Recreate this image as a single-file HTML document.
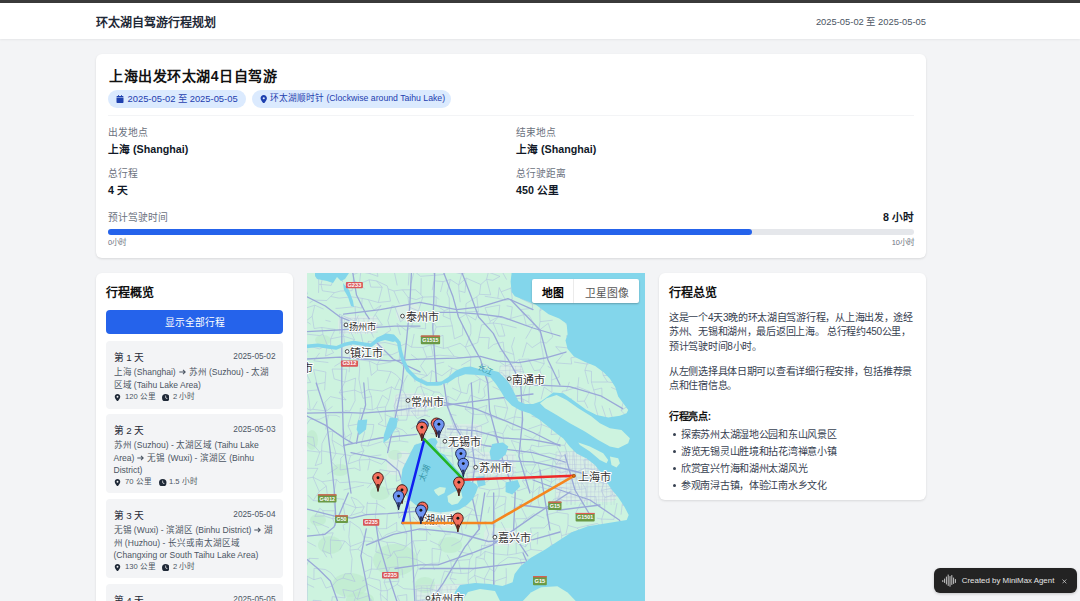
<!DOCTYPE html>
<html lang="zh-CN"><head><meta charset="utf-8">
<style>
*{box-sizing:border-box;margin:0;padding:0}
html,body{width:1080px;height:601px;overflow:hidden}
body{background:#f3f4f6;font-family:"Liberation Sans",sans-serif;position:relative;color:#111827}
.abs{position:absolute;white-space:nowrap}
#topbar{position:absolute;left:0;top:0;width:1080px;height:3px;background:#3a3a3a}
#header{position:absolute;left:0;top:3px;width:1080px;height:36px;background:#fff;box-shadow:0 1px 2px rgba(0,0,0,0.06)}
.card{position:absolute;background:#fff;border-radius:6px;box-shadow:0 1px 3px rgba(0,0,0,0.08),0 1px 2px rgba(0,0,0,0.04)}
.badge{position:absolute;height:17.5px;border-radius:9px;background:#dbeafe;color:#1e40af;font-size:9px;line-height:17.5px;white-space:nowrap}
.lbl{font-size:9.75px;color:#6b7280}
.val{font-size:10.7px;font-weight:700;color:#111827}
.day{position:absolute;left:106px;width:177px;background:#f3f4f6;border-radius:4px}
.day .t{position:absolute;left:7.5px;font-size:9.75px;font-weight:500;color:#1f2937;white-space:nowrap}
.day .d{position:absolute;right:7.5px;font-size:8.25px;color:#4b5563;white-space:nowrap}
.day .r{position:absolute;left:7.5px;width:175px;white-space:nowrap;font-size:8.55px;line-height:12.4px;color:#4b5563}
.day .m{position:absolute;left:8px;width:150px;height:8px;font-size:7.6px;line-height:8px;color:#4b5563;white-space:nowrap}
.ic{position:absolute;top:0}
.para{font-size:10px;letter-spacing:-0.28px;line-height:14.6px;color:#374151}
.li{padding-left:12px}
.li i{position:absolute;left:4.2px;top:5.1px;width:3px;height:3px;border-radius:50%;background:#374151}
</style></head><body>
<div id="topbar"></div>
<div id="header">
  <div class="abs" style="left:96px;top:10px;font-size:12px;font-weight:600;color:#1f2937">环太湖自驾游行程规划</div>
  <div class="abs" style="right:154px;top:10.6px;font-size:9.4px;color:#4b5563">2025-05-02 至 2025-05-05</div>
</div>

<div class="card" style="left:96px;top:54px;width:830px;height:204px">
  <div class="abs" style="left:13px;top:11px;font-size:14px;letter-spacing:0.55px;font-weight:700;color:#111">上海出发环太湖4日自驾游</div>
  <div class="badge" style="left:12px;top:36px;width:138px">
    <svg style="position:absolute;left:8px;top:4.8px" width="8" height="8" viewBox="0 0 448 512"><path fill="#1e40af" d="M96 32V64H48C21.5 64 0 85.5 0 112v48H448V112c0-26.5-21.5-48-48-48H352V32c0-17.7-14.3-32-32-32s-32 14.3-32 32V64H160V32c0-17.7-14.3-32-32-32S96 14.3 96 32zM448 192H0V464c0 26.5 21.5 48 48 48H400c26.5 0 48-21.5 48-48V192z"/></svg>
    <span style="position:absolute;left:19.5px;top:0;font-size:9.4px">2025-05-02 至 2025-05-05</span></div>
  <div class="badge" style="left:155.5px;top:36px;width:199px">
    <svg style="position:absolute;left:8px;top:4.6px" width="7.5" height="8.5" viewBox="0 0 384 512"><path fill="#1e40af" d="M215.7 499.2C267 435 384 279.4 384 192C384 86 298 0 192 0S0 86 0 192c0 87.4 117 243 168.3 307.2c12.3 15.3 35.1 15.3 47.4 0zM192 128a64 64 0 1 1 0 128 64 64 0 1 1 0-128z"/></svg>
    <span style="position:absolute;left:18.5px;top:0;font-size:8.7px">环太湖顺时针 (Clockwise around Taihu Lake)</span></div>
  <div style="position:absolute;left:12px;top:60.5px;width:806px;height:1px;background:#f3f4f6"></div>
  <div class="abs lbl" style="left:12px;top:71.3px">出发地点</div>
  <div class="abs val" style="left:12px;top:86.5px">上海 (Shanghai)</div>
  <div class="abs lbl" style="left:420px;top:71.3px">结束地点</div>
  <div class="abs val" style="left:420px;top:86.5px">上海 (Shanghai)</div>
  <div class="abs lbl" style="left:12px;top:112.3px">总行程</div>
  <div class="abs val" style="left:12px;top:127.6px">4 天</div>
  <div class="abs lbl" style="left:420px;top:112.3px">总行驶距离</div>
  <div class="abs val" style="left:420px;top:127.6px">450 公里</div>
  <div class="abs lbl" style="left:12px;top:156px">预计驾驶时间</div>
  <div class="abs val" style="right:12px;top:155px">8 小时</div>
  <div style="position:absolute;left:12px;top:175px;width:806px;height:5.5px;border-radius:3px;background:#e5e7eb"><div style="width:644px;height:100%;border-radius:3px;background:#2563eb"></div></div>
  <div class="abs" style="left:12px;top:182px;font-size:7.5px;color:#6b7280">0小时</div>
  <div class="abs" style="right:12px;top:182px;font-size:7.5px;color:#6b7280">10小时</div>
</div>

<!-- sidebar -->
<div class="card" style="left:96px;top:273px;width:197px;height:400px">
  <div class="abs" style="left:10px;top:10px;font-size:12px;font-weight:700;color:#111">行程概览</div>
  <div style="position:absolute;left:10px;top:36.5px;width:177px;height:24px;border-radius:4px;background:#2563eb;color:#fff;font-size:9.75px;line-height:25.5px;text-align:center">显示全部行程</div>
</div>
<div class="day" style="top:341.4px;height:67.4px">
  <div class="t" style="top:9px">第 1 天</div>
  <div class="d" style="top:10.5px">2025-05-02</div>
  <div class="r" style="top:25px">上海 (Shanghai) <svg width="7" height="6" viewBox="0 0 7 6" style="vertical-align:0px;margin:0 0.6px"><path d="M0.3 3H6.2M4 0.9L6.2 3L4 5.1" fill="none" stroke="#4b5563" stroke-width="1.05"/></svg> 苏州 (Suzhou) - 太湖<br>区域 (Taihu Lake Area)</div>
  <div class="m" style="top:52.5px"><svg class="ic" width="7" height="7.4" viewBox="0 0 384 512" style="left:-0.3px;top:0.2px"><path fill="#1f2937" d="M215.7 499.2C267 435 384 279.4 384 192C384 86 298 0 192 0S0 86 0 192c0 87.4 117 243 168.3 307.2c12.3 15.3 35.1 15.3 47.4 0zM192 128a64 64 0 1 1 0 128 64 64 0 1 1 0-128z"/></svg><span style="position:absolute;left:11px;top:-0.5px">120 公里</span><svg class="ic" style="left:47.5px" width="7.5" height="7.5" viewBox="0 0 512 512"><path fill="#1f2937" d="M256 0a256 256 0 1 1 0 512A256 256 0 1 1 256 0zM232 120V256c0 8 4 15.5 10.7 20l96 64c11 7.4 25.9 4.4 33.3-6.7s4.4-25.9-6.7-33.3L280 243.2V120c0-13.3-10.7-24-24-24s-24 10.7-24 24z"/></svg><span style="position:absolute;left:59.0px;top:-0.5px">2 小时</span></div>
</div>
<div class="day" style="top:414.2px;height:79px">
  <div class="t" style="top:9px">第 2 天</div>
  <div class="d" style="top:10.5px">2025-05-03</div>
  <div class="r" style="top:25px">苏州 (Suzhou) - 太湖区域 (Taihu Lake<br>Area) <svg width="7" height="6" viewBox="0 0 7 6" style="vertical-align:0px;margin:0 0.6px"><path d="M0.3 3H6.2M4 0.9L6.2 3L4 5.1" fill="none" stroke="#4b5563" stroke-width="1.05"/></svg> 无锡 (Wuxi) - 滨湖区 (Binhu<br>District)</div>
  <div class="m" style="top:64.5px"><svg class="ic" width="7" height="7.4" viewBox="0 0 384 512" style="left:-0.3px;top:0.2px"><path fill="#1f2937" d="M215.7 499.2C267 435 384 279.4 384 192C384 86 298 0 192 0S0 86 0 192c0 87.4 117 243 168.3 307.2c12.3 15.3 35.1 15.3 47.4 0zM192 128a64 64 0 1 1 0 128 64 64 0 1 1 0-128z"/></svg><span style="position:absolute;left:11px;top:-0.5px">70 公里</span><svg class="ic" style="left:45px" width="7.5" height="7.5" viewBox="0 0 512 512"><path fill="#1f2937" d="M256 0a256 256 0 1 1 0 512A256 256 0 1 1 256 0zM232 120V256c0 8 4 15.5 10.7 20l96 64c11 7.4 25.9 4.4 33.3-6.7s4.4-25.9-6.7-33.3L280 243.2V120c0-13.3-10.7-24-24-24s-24 10.7-24 24z"/></svg><span style="position:absolute;left:55.0px;top:-0.5px">1.5 小时</span></div>
</div>
<div class="day" style="top:499.2px;height:79.3px">
  <div class="t" style="top:9px">第 3 天</div>
  <div class="d" style="top:10.5px">2025-05-04</div>
  <div class="r" style="top:25px">无锡 (Wuxi) - 滨湖区 (Binhu District) <svg width="7" height="6" viewBox="0 0 7 6" style="vertical-align:0px;margin:0 0.6px"><path d="M0.3 3H6.2M4 0.9L6.2 3L4 5.1" fill="none" stroke="#4b5563" stroke-width="1.05"/></svg> 湖<br>州 (Huzhou) - 长兴或南太湖区域<br>(Changxing or South Taihu Lake Area)</div>
  <div class="m" style="top:64.5px"><svg class="ic" width="7" height="7.4" viewBox="0 0 384 512" style="left:-0.3px;top:0.2px"><path fill="#1f2937" d="M215.7 499.2C267 435 384 279.4 384 192C384 86 298 0 192 0S0 86 0 192c0 87.4 117 243 168.3 307.2c12.3 15.3 35.1 15.3 47.4 0zM192 128a64 64 0 1 1 0 128 64 64 0 1 1 0-128z"/></svg><span style="position:absolute;left:11px;top:-0.5px">130 公里</span><svg class="ic" style="left:47.5px" width="7.5" height="7.5" viewBox="0 0 512 512"><path fill="#1f2937" d="M256 0a256 256 0 1 1 0 512A256 256 0 1 1 256 0zM232 120V256c0 8 4 15.5 10.7 20l96 64c11 7.4 25.9 4.4 33.3-6.7s4.4-25.9-6.7-33.3L280 243.2V120c0-13.3-10.7-24-24-24s-24 10.7-24 24z"/></svg><span style="position:absolute;left:59.0px;top:-0.5px">2 小时</span></div>
</div>
<div class="day" style="top:584.2px;height:79px">
  <div class="t" style="top:9px">第 4 天</div>
  <div class="d" style="top:10.5px">2025-05-05</div>
</div>

<!-- map -->
<div id="map" style="position:absolute;left:307px;top:273px;width:338px;height:328px;background:#c8efd9;overflow:hidden">
<svg width="338" height="328" viewBox="307 273 338 328" style="position:absolute;left:0;top:0">
<rect x="307" y="273" width="338" height="328" fill="#cdf3df"/>
<rect x="338" y="316" width="40" height="18" rx="6" fill="#e6ecee" opacity="0.45"/>
<rect x="342" y="343" width="42" height="15" rx="6" fill="#e6ecee" opacity="0.45"/>
<rect x="396" y="304" width="24" height="17" rx="6" fill="#e6ecee" opacity="0.45"/>
<rect x="394" y="393" width="34" height="23" rx="6" fill="#e6ecee" opacity="0.45"/>
<rect x="436" y="424" width="46" height="28" rx="6" fill="#e6ecee" opacity="0.45"/>
<rect x="468" y="452" width="48" height="24" rx="6" fill="#e6ecee" opacity="0.45"/>
<rect x="556" y="452" width="60" height="50" rx="6" fill="#e6ecee" opacity="0.45"/>
<rect x="500" y="364" width="22" height="24" rx="6" fill="#e6ecee" opacity="0.45"/>
<rect x="484" y="528" width="32" height="18" rx="6" fill="#e6ecee" opacity="0.45"/>
<rect x="416" y="584" width="52" height="17" rx="6" fill="#e6ecee" opacity="0.45"/>
<rect x="414" y="508" width="42" height="20" rx="6" fill="#e6ecee" opacity="0.45"/>
<rect x="387" y="451" width="23" height="24" rx="6" fill="#e6ecee" opacity="0.45"/>
<ellipse cx="395" cy="560" rx="22" ry="16" fill="#bde9cb" opacity="0.6"/>
<ellipse cx="350" cy="585" rx="18" ry="12" fill="#bde9cb" opacity="0.6"/>
<ellipse cx="330" cy="545" rx="12" ry="9" fill="#bde9cb" opacity="0.6"/>
<ellipse cx="380" cy="493" rx="10" ry="7" fill="#bde9cb" opacity="0.6"/>
<ellipse cx="450" cy="545" rx="12" ry="8" fill="#bde9cb" opacity="0.6"/>
<ellipse cx="323" cy="340" rx="8" ry="5" fill="#bde9cb" opacity="0.6"/>
<ellipse cx="340" cy="470" rx="9" ry="6" fill="#bde9cb" opacity="0.6"/>
<ellipse cx="318" cy="520" rx="8" ry="6" fill="#bde9cb" opacity="0.6"/>
<ellipse cx="425" cy="585" rx="10" ry="8" fill="#bde9cb" opacity="0.6"/>
<ellipse cx="360" cy="600" rx="14" ry="8" fill="#bde9cb" opacity="0.6"/>
<ellipse cx="312" cy="440" rx="6" ry="10" fill="#bde9cb" opacity="0.6"/>
<ellipse cx="395" cy="455" rx="7" ry="5" fill="#bde9cb" opacity="0.6"/>
<path d="M296.6 261.2L304.0 262.0M299.2 269.6L306.1 276.0M294.5 291.1L307.4 294.1M294.6 305.7L297.4 320.6M297.4 320.6L305.9 321.1M297.4 320.6L295.0 324.8M299.0 339.6L304.4 333.9M298.6 344.2L301.8 350.4M301.8 350.4L307.7 352.1M300.9 361.3L295.2 368.9M295.2 368.9L296.5 383.5M296.5 383.5L310.6 382.5M296.5 383.5L295.4 390.7M298.4 404.5L310.2 410.2M299.4 425.4L306.1 425.2M299.4 425.4L296.5 435.7M297.6 442.4L300.4 454.6M300.4 454.6L304.7 450.3M300.4 454.6L296.0 462.6M296.0 462.6L298.2 474.0M298.2 474.0L299.8 478.3M299.8 478.3L303.8 478.9M299.8 478.3L301.8 485.9M301.8 485.9L303.2 492.0M301.8 485.9L297.3 500.1M295.2 506.9L305.0 505.8M295.2 506.9L294.3 517.3M294.3 517.3L300.1 525.6M300.1 525.6L309.8 528.9M300.1 525.6L301.0 532.5M301.0 532.5L306.7 533.9M301.0 532.5L299.6 543.8M299.6 543.8L303.7 539.8M299.6 543.8L298.6 551.6M298.6 551.6L300.7 564.6M300.7 564.6L309.6 558.3M297.8 571.3L303.2 573.6M299.2 591.9L307.3 584.2M299.2 591.9L300.6 595.3M300.6 595.3L297.1 607.3M294.2 614.7L295.3 620.9M295.3 620.9L304.3 626.2M304.0 262.0L314.6 261.8M304.0 262.0L306.1 276.0M306.1 276.0L303.6 281.6M303.6 281.6L307.4 294.1M309.6 302.9L313.8 300.1M305.2 308.3L314.8 305.2M305.2 308.3L305.9 321.1M305.9 321.1L312.2 316.2M305.9 321.1L310.7 324.2M304.4 333.9L319.7 335.6M304.9 344.9L319.5 348.9M304.9 344.9L307.7 352.1M306.0 372.5L310.6 382.5M307.1 390.9L318.7 389.8M307.1 390.9L308.4 395.4M308.4 395.4L310.2 410.2M310.2 410.2L312.7 409.3M310.0 419.4L319.3 419.3M310.0 419.4L306.1 425.2M303.8 436.1L313.4 437.3M303.8 436.1L303.5 440.5M303.5 440.5L314.7 446.4M303.5 440.5L304.7 450.3M304.7 450.3L319.8 452.2M303.0 468.2L317.8 468.4M303.8 478.9L313.0 477.2M307.9 495.2L313.2 500.6M305.0 505.8L305.9 513.0M303.7 539.8L316.2 546.5M309.6 558.3L318.6 558.7M309.6 558.3L303.2 573.6M307.2 576.2L313.9 579.7M307.2 576.2L307.3 584.2M307.3 584.2L314.1 587.4M307.3 584.2L307.2 600.8M309.9 607.6L305.1 613.9M305.1 613.9L304.3 626.2M304.3 626.2L307.3 635.2M314.6 261.8L325.2 260.1M318.5 276.9L324.5 270.5M318.5 276.9L318.8 284.4M318.8 284.4L321.0 284.4M318.8 284.4L318.5 292.9M313.8 300.1L326.8 300.5M314.8 305.2L323.6 309.1M314.8 305.2L312.2 316.2M312.2 316.2L314.1 328.5M314.1 328.5L321.8 327.5M319.7 335.6L323.0 334.2M319.5 348.9L327.2 345.1M319.6 352.9L313.8 360.8M313.8 360.8L328.3 362.5M313.6 369.6L325.9 372.0M313.6 369.6L317.0 384.2M317.0 384.2L325.1 382.5M317.0 384.2L318.7 389.8M317.2 401.4L312.7 409.3M312.7 409.3L326.6 411.0M319.3 419.3L328.5 415.1M313.4 437.3L314.7 446.4M314.7 446.4L319.8 452.2M319.8 452.2L321.6 450.9M319.8 452.2L315.2 465.6M315.2 465.6L321.6 463.4M317.8 468.4L313.0 477.2M313.0 477.2L322.2 481.7M313.0 477.2L319.2 491.5M319.2 491.5L326.3 486.1M319.2 491.5L313.2 500.6M313.2 500.6L328.1 501.7M319.8 508.3L322.8 510.6M319.8 508.3L314.8 516.4M314.8 516.4L324.2 515.9M313.0 521.1L328.9 527.7M313.0 521.1L319.8 535.2M314.0 568.3L325.4 569.5M314.0 568.3L313.9 579.7M313.9 579.7L321.1 577.7M313.0 600.3L321.5 600.9M313.0 600.3L314.8 605.7M314.8 605.7L327.3 609.8M316.7 618.2L315.4 627.3M315.4 627.3L321.3 626.2M315.4 627.3L316.0 633.3M325.2 260.1L333.4 267.3M324.5 270.5L321.0 284.4M321.0 284.4L331.2 285.4M321.0 284.4L322.4 290.8M322.4 290.8L334.6 292.6M326.8 300.5L330.7 296.5M325.4 320.3L330.6 321.5M321.8 327.5L335.1 329.4M321.8 327.5L323.0 334.2M323.0 334.2L327.2 345.1M327.2 345.1L330.5 347.9M327.2 345.1L325.5 356.1M325.5 356.1L333.6 352.7M325.9 372.0L325.1 382.5M325.1 382.5L324.6 390.3M324.8 402.5L330.4 396.6M324.8 402.5L326.6 411.0M326.6 411.0L332.5 406.4M328.5 415.1L336.1 415.3M328.5 415.1L325.5 429.5M327.7 432.1L332.8 431.1M327.7 432.1L322.0 443.5M322.0 443.5L321.6 450.9M321.6 450.9L335.9 453.4M321.6 450.9L321.6 463.4M327.3 474.2L337.5 467.9M322.2 481.7L336.6 479.5M322.2 481.7L326.3 486.1M326.3 486.1L328.1 501.7M328.1 501.7L333.1 498.1M322.8 510.6L335.5 510.9M322.8 510.6L324.2 515.9M324.2 515.9L332.7 518.7M322.3 533.5L333.2 532.8M322.3 533.5L325.1 541.7M325.1 541.7L322.6 550.5M322.6 550.5L330.6 553.9M322.6 550.5L326.8 557.2M325.4 569.5L330.7 572.7M321.1 577.7L326.0 588.1M326.0 588.1L332.3 585.9M321.5 600.9L327.3 609.8M327.3 609.8L331.3 605.6M321.8 613.1L332.1 618.7M321.8 613.1L321.3 626.2M336.6 271.1L339.0 272.1M336.6 271.1L331.2 285.4M334.6 292.6L340.6 291.0M334.6 292.6L330.7 296.5M330.7 296.5L339.0 298.1M335.5 308.4L339.7 308.2M335.1 329.4L330.7 338.8M330.7 338.8L343.7 336.2M330.7 338.8L330.5 347.9M330.5 347.9L333.6 352.7M334.4 366.4L342.1 361.6M332.1 369.0L346.9 369.2M332.1 369.0L334.2 378.9M334.2 378.9L344.8 382.1M330.4 396.6L346.1 400.0M336.1 415.3L340.1 417.2M332.8 431.1L345.4 437.6M332.8 431.1L332.0 440.1M332.0 440.1L343.7 447.1M332.0 440.1L335.9 453.4M335.9 453.4L344.5 454.5M335.9 453.4L331.5 461.8M331.5 461.8L337.5 467.9M336.6 479.5L339.8 482.7M336.6 479.5L334.0 491.7M334.0 491.7L333.1 498.1M333.1 498.1L344.0 499.4M333.1 498.1L335.5 510.9M335.5 510.9L332.7 518.7M332.7 518.7L345.4 518.0M332.7 518.7L335.7 526.1M333.2 532.8L330.4 540.0M330.4 540.0L344.9 541.0M330.4 540.0L330.6 553.9M330.6 553.9L332.0 558.3M330.7 572.7L337.0 580.4M337.0 580.4L343.0 578.1M337.0 580.4L332.3 585.9M332.3 596.7L345.1 597.9M332.3 596.7L331.3 605.6M331.3 605.6L344.1 602.6M339.0 272.1L342.8 282.0M340.6 291.0L352.1 290.7M339.0 298.1L351.7 296.9M339.7 308.2L355.1 306.6M339.3 314.2L355.8 321.5M339.3 314.2L341.4 324.9M341.4 324.9L348.1 326.7M341.4 324.9L343.7 336.2M343.7 336.2L354.6 339.7M343.7 336.2L345.0 346.3M346.9 369.2L344.8 382.1M344.8 382.1L355.6 378.1M344.8 382.1L339.4 392.7M339.4 392.7L354.6 390.1M339.4 392.7L346.1 400.0M344.9 410.5L349.9 411.2M343.0 428.7L345.4 437.6M345.4 437.6L351.6 433.4M343.7 447.1L349.1 442.8M344.5 454.5L350.5 455.7M344.5 454.5L340.8 458.2M340.8 458.2L340.1 469.9M340.1 469.9L354.7 468.0M339.8 482.7L355.4 481.7M343.5 490.0L355.2 487.3M342.9 503.0L356.0 507.7M342.9 503.0L345.4 518.0M345.4 518.0L350.9 515.4M343.0 525.3L350.2 521.4M343.0 525.3L344.3 530.5M344.9 541.0L350.3 546.5M344.9 541.0L339.6 550.1M344.9 573.8L351.0 573.6M344.9 573.8L343.0 578.1M343.0 578.1L355.1 581.5M342.8 589.5L353.0 591.3M342.8 589.5L345.1 597.9M344.9 622.4L354.0 625.2M344.9 622.4L343.5 629.1M348.5 262.2L364.4 261.0M348.5 262.2L353.4 274.5M353.4 274.5L360.8 271.7M353.4 274.5L353.4 280.3M353.4 280.3L359.4 283.9M353.4 280.3L352.1 290.7M351.7 296.9L362.2 298.4M355.1 306.6L361.5 308.2M355.1 306.6L355.8 321.5M355.8 321.5L358.3 315.3M355.8 321.5L348.1 326.7M348.1 326.7L354.6 339.7M354.6 339.7L351.6 343.1M351.6 343.1L349.7 357.6M349.7 357.6L349.7 363.7M349.7 363.7L349.1 372.2M355.6 378.1L354.6 390.1M354.6 390.1L361.6 393.1M354.6 390.1L355.1 400.6M355.1 400.6L349.9 411.2M351.9 413.2L348.0 425.9M348.0 425.9L357.5 424.2M348.0 425.9L351.6 433.4M351.6 433.4L349.1 442.8M350.5 455.7L363.9 450.7M350.5 455.7L348.0 464.0M348.0 464.0L359.2 460.0M354.7 468.0L360.2 470.6M355.4 481.7L364.6 482.8M355.2 487.3L364.0 485.2M351.0 497.1L357.3 499.7M351.0 497.1L356.0 507.7M356.0 507.7L364.2 506.8M356.0 507.7L350.9 515.4M350.9 515.4L361.7 512.0M350.2 521.4L360.1 528.4M350.2 521.4L348.8 536.7M348.8 536.7L350.3 546.5M350.3 546.5L364.8 541.0M350.3 546.5L350.0 550.1M350.0 550.1L357.9 549.2M350.0 550.1L352.1 558.5M352.1 558.5L351.0 573.6M351.0 573.6L355.1 581.5M353.0 591.3L360.7 588.4M353.0 591.3L355.5 597.4M355.5 597.4L357.3 599.3M355.5 597.4L353.8 602.4M353.8 602.4L358.9 609.4M353.9 614.6L362.2 613.4M353.9 614.6L354.0 625.2M354.0 625.2L358.0 622.0M354.0 625.2L350.3 629.4M364.4 261.0L366.9 260.6M364.4 261.0L360.8 271.7M360.8 271.7L370.2 273.7M360.8 271.7L359.4 283.9M359.4 283.9L369.1 279.8M359.4 283.9L364.8 289.1M362.2 298.4L368.4 299.7M362.2 298.4L361.5 308.2M358.7 330.2L361.0 333.8M361.0 333.8L364.3 349.0M364.3 349.0L368.5 341.2M364.3 349.0L360.6 351.1M360.6 351.1L358.5 359.7M358.5 359.7L369.4 361.1M358.5 359.7L359.7 368.7M359.7 368.7L358.9 379.1M358.9 379.1L361.6 393.1M361.6 393.1L368.7 389.4M361.6 393.1L363.0 398.3M363.0 398.3L371.5 396.6M360.3 408.2L372.4 409.9M360.3 408.2L360.0 415.7M360.0 415.7L357.5 424.2M357.5 424.2L373.8 424.5M357.5 424.2L364.7 432.0M364.7 432.0L361.0 445.0M361.0 445.0L367.8 446.1M361.0 445.0L363.9 450.7M363.9 450.7L359.2 460.0M359.2 460.0L370.0 459.5M359.2 460.0L360.2 470.6M364.6 482.8L371.3 483.6M357.3 499.7L364.2 506.8M364.2 506.8L361.7 512.0M361.7 512.0L366.5 515.1M360.1 528.4L363.6 536.8M363.6 536.8L371.9 538.0M363.6 536.8L364.8 541.0M364.8 541.0L373.5 541.6M364.8 541.0L357.9 549.2M357.9 549.2L367.5 555.5M364.5 571.8L371.3 569.0M362.2 581.1L369.0 577.7M360.7 588.4L367.4 584.0M360.7 588.4L357.3 599.3M357.3 599.3L368.2 595.8M358.9 609.4L373.6 603.0M362.2 613.4L358.0 622.0M358.0 622.0L362.1 634.6M366.9 260.6L370.2 273.7M370.2 273.7L378.0 276.4M369.1 279.8L376.5 280.9M369.1 279.8L370.8 287.1M370.8 287.1L382.2 287.2M368.4 299.7L378.3 302.5M368.4 299.7L373.7 310.2M373.7 310.2L381.1 305.3M373.1 317.8L375.3 314.5M367.9 325.0L382.4 325.1M367.9 325.0L373.7 337.6M368.5 341.2L377.7 343.2M368.5 341.2L370.0 355.4M370.0 355.4L382.7 354.9M369.4 361.1L377.1 364.7M369.4 361.1L371.3 375.4M371.3 375.4L377.5 370.2M367.8 377.3L368.7 389.4M368.7 389.4L382.3 391.1M368.7 389.4L371.5 396.6M371.5 396.6L372.4 409.9M372.4 409.9L376.9 407.8M373.8 424.5L372.6 432.8M372.6 432.8L367.8 446.1M367.8 446.1L382.4 441.5M368.4 456.6L381.4 454.9M368.4 456.6L370.0 459.5M370.0 459.5L381.6 464.2M370.0 459.5L367.8 470.3M371.3 483.6L377.6 478.9M371.3 483.6L367.2 488.1M367.7 501.8L367.1 503.4M367.1 503.4L377.0 503.5M367.1 503.4L366.5 515.1M371.9 538.0L373.5 541.6M373.5 541.6L377.1 539.7M367.5 555.5L372.0 557.3M372.0 557.3L371.3 569.0M371.3 569.0L376.9 569.3M371.3 569.0L369.0 577.7M369.0 577.7L380.0 580.4M367.4 584.0L381.0 590.8M368.2 595.8L373.6 603.0M373.7 612.7L379.5 614.0M373.7 612.7L368.9 626.6M375.4 263.8L378.0 276.4M376.5 280.9L387.2 285.9M376.5 280.9L382.2 287.2M382.2 287.2L378.3 302.5M378.3 302.5L390.5 301.2M381.1 305.3L375.3 314.5M375.3 314.5L382.4 325.1M381.0 339.2L384.3 334.3M381.0 339.2L377.7 343.2M377.7 343.2L385.0 342.5M377.7 343.2L382.7 354.9M382.7 354.9L391.8 354.7M382.7 354.9L377.1 364.7M377.1 364.7L391.4 362.0M377.1 364.7L377.5 370.2M377.5 370.2L390.9 371.6M382.3 391.1L391.6 386.8M382.5 395.2L388.8 400.0M382.5 395.2L376.9 407.8M376.9 407.8L385.7 406.9M376.9 407.8L382.7 420.6M382.7 420.6L378.1 424.0M378.1 424.0L386.0 426.8M381.6 464.2L386.5 459.6M379.9 469.6L390.4 471.4M379.9 469.6L377.6 478.9M376.6 500.0L377.0 503.5M377.0 503.5L385.3 508.6M377.0 503.5L375.3 516.4M375.3 516.4L377.6 528.8M377.6 528.8L386.5 528.6M377.6 528.8L382.1 537.9M382.1 537.9L386.5 534.5M377.1 539.7L386.9 542.3M377.1 539.7L375.8 552.0M375.8 552.0L390.9 556.0M380.7 560.6L376.9 569.3M376.9 569.3L389.8 567.6M380.0 580.4L381.0 590.8M381.0 590.8L387.4 590.6M381.0 590.8L380.3 594.0M380.3 594.0L387.2 600.1M380.3 594.0L381.7 604.4M381.7 604.4L387.7 603.3M381.7 604.4L379.5 614.0M379.5 614.0L384.1 615.4M379.5 614.0L380.9 621.6M380.9 621.6L389.1 627.3M380.9 621.6L377.0 631.0M388.6 271.6L394.2 271.3M387.2 285.9L388.1 288.9M388.1 288.9L393.9 290.9M388.1 288.9L390.5 301.2M391.9 305.8L394.6 306.0M391.9 305.8L387.8 320.6M387.8 320.6L390.7 330.3M390.7 330.3L384.3 334.3M385.0 342.5L400.2 346.0M391.8 354.7L399.6 351.3M390.9 371.6L396.2 374.8M390.9 371.6L386.1 383.2M391.6 386.8L394.7 389.2M391.6 386.8L388.8 400.0M388.8 400.0L385.7 406.9M385.7 406.9L385.1 414.6M385.1 414.6L398.8 420.2M385.1 414.6L386.0 426.8M386.0 426.8L393.3 426.5M389.2 432.6L399.1 431.3M384.1 442.6L399.7 440.9M384.1 442.6L389.4 450.5M390.4 471.4L396.4 471.7M390.4 471.4L384.5 476.8M384.5 476.8L387.2 489.4M387.2 489.4L396.6 488.5M387.2 489.4L389.1 494.7M387.3 514.3L386.5 528.6M386.5 528.6L396.7 522.4M386.5 534.5L396.8 530.9M386.9 542.3L394.0 542.4M386.9 542.3L390.9 556.0M390.9 556.0L393.7 551.5M390.9 556.0L386.9 558.6M389.8 567.6L398.1 566.7M389.8 567.6L384.0 582.2M384.0 582.2L398.9 581.2M384.0 582.2L387.4 590.6M387.4 590.6L397.1 584.4M387.4 590.6L387.2 600.1M387.2 600.1L387.7 603.3M387.7 603.3L384.1 615.4M384.1 615.4L399.9 619.0M384.1 615.4L389.1 627.3M389.1 627.3L398.9 626.5M389.1 627.3L384.7 634.0M396.0 264.0L394.2 271.3M394.2 271.3L409.3 270.3M394.2 271.3L397.2 285.4M393.9 290.9L402.5 289.8M393.9 290.9L399.4 303.7M394.6 306.0L400.5 321.8M400.5 321.8L408.5 315.1M396.9 323.4L406.0 330.4M396.9 323.4L400.4 335.1M400.2 346.0L406.0 343.6M400.2 346.0L399.6 351.3M399.6 351.3L399.3 360.8M399.3 360.8L403.3 366.5M396.2 374.8L399.6 378.5M399.6 378.5L403.3 383.3M399.6 378.5L394.7 389.2M394.7 389.2L402.9 390.2M397.1 398.1L407.1 397.9M397.1 398.1L394.0 406.0M394.0 406.0L398.8 420.2M398.8 420.2L406.6 420.1M398.8 420.2L393.3 426.5M393.3 426.5L402.8 429.9M393.3 426.5L399.1 431.3M399.1 431.3L399.7 440.9M399.7 440.9L408.4 442.1M397.8 453.4L409.9 453.6M397.8 453.4L398.0 460.4M398.0 460.4L404.9 464.1M398.0 460.4L396.4 471.7M396.4 471.7L396.4 481.3M396.4 481.3L407.9 476.4M393.2 499.0L407.1 501.9M396.9 504.9L399.1 518.2M399.1 518.2L404.5 512.0M396.7 522.4L396.8 530.9M396.8 530.9L406.9 533.5M394.0 542.4L406.1 546.2M393.7 551.5L403.1 549.8M393.7 551.5L397.1 557.3M397.1 557.3L407.2 557.2M397.1 557.3L398.1 566.7M398.1 566.7L398.9 581.2M398.9 581.2L397.1 584.4M397.1 584.4L403.8 588.7M397.0 596.0L406.7 594.6M397.0 596.0L400.6 603.1M400.6 603.1L407.0 605.8M398.9 626.5L403.9 621.2M409.3 270.3L408.3 285.4M402.5 289.8L415.5 289.8M402.5 289.8L408.0 297.3M408.0 297.3L416.2 299.6M408.0 297.3L409.2 307.2M409.2 307.2L418.5 310.9M409.2 307.2L408.5 315.1M408.5 315.1L413.0 321.2M406.0 330.4L411.4 327.3M406.0 343.6L411.5 347.2M407.4 375.2L403.3 383.3M403.3 383.3L402.9 390.2M402.9 390.2L407.1 397.9M407.1 397.9L413.5 397.4M407.1 397.9L409.0 408.4M409.0 408.4L406.6 420.1M402.8 429.9L407.0 434.2M409.9 453.6L412.8 449.8M404.9 464.1L412.9 458.3M404.9 464.1L405.5 468.4M405.5 468.4L413.7 473.0M408.6 487.0L416.7 487.1M408.6 487.0L407.1 501.9M407.1 501.9L415.4 497.5M407.1 501.9L406.7 508.3M406.7 508.3L417.3 507.2M406.7 508.3L404.5 512.0M404.5 512.0L402.3 522.2M402.3 522.2L418.7 522.7M402.3 522.2L406.9 533.5M406.9 533.5L406.1 546.2M406.1 546.2L413.1 540.9M406.1 546.2L403.1 549.8M407.2 557.2L417.0 559.6M402.0 568.8L402.9 577.9M403.8 588.7L416.0 589.5M406.7 594.6L407.0 605.8M403.1 618.5L416.6 617.9M403.1 618.5L403.9 621.2M403.9 621.2L414.5 625.8M418.0 266.3L414.2 271.1M414.2 271.1L420.6 276.3M414.2 271.1L411.1 283.2M415.5 289.8L420.9 294.4M416.2 299.6L422.8 297.1M418.5 310.9L420.2 305.3M413.0 321.2L425.5 319.1M413.0 321.2L411.4 327.3M411.4 327.3L425.6 328.9M414.2 333.9L411.5 347.2M411.5 347.2L422.9 347.5M411.1 354.4L418.5 360.1M412.6 372.9L427.3 375.6M412.6 372.9L415.1 382.1M417.5 387.4L420.9 386.3M417.5 387.4L413.5 397.4M413.5 397.4L426.8 401.5M411.4 411.1L425.1 410.6M411.4 411.1L417.3 418.7M417.3 418.7L425.1 415.3M411.1 428.8L420.8 422.8M416.9 443.6L412.8 449.8M413.7 473.0L422.9 469.6M416.6 482.8L427.7 480.0M416.6 482.8L416.7 487.1M416.7 487.1L426.8 489.9M417.3 507.2L423.5 509.2M413.1 517.1L418.7 522.7M418.0 530.1L426.9 530.7M413.1 540.9L426.6 540.4M413.1 540.9L417.0 555.6M417.0 555.6L420.0 549.6M417.0 555.6L417.0 559.6M417.0 559.6L426.1 564.8M417.0 559.6L418.0 568.6M418.0 568.6L420.0 569.9M418.0 568.6L412.9 582.3M416.0 589.5L421.5 588.0M416.0 589.5L416.3 600.8M416.3 600.8L422.8 599.7M416.3 600.8L414.8 608.7M416.6 617.9L422.3 612.7M420.6 276.3L434.6 275.3M421.2 278.2L420.9 294.4M420.9 294.4L422.8 297.1M422.8 297.1L436.1 296.7M422.8 297.1L420.2 305.3M425.5 319.1L430.6 316.1M425.5 319.1L425.6 328.9M420.5 336.7L432.0 339.1M422.9 347.5L430.9 344.7M422.9 347.5L426.6 357.1M426.6 357.1L433.3 356.0M426.6 357.1L420.5 365.9M420.5 365.9L427.3 375.6M427.3 375.6L431.8 370.6M427.3 375.6L420.9 378.6M420.9 378.6L430.2 383.7M420.9 378.6L420.9 386.3M420.9 386.3L434.3 391.9M420.9 386.3L426.8 401.5M426.8 401.5L430.4 398.5M426.8 401.5L425.1 410.6M425.1 410.6L435.2 408.6M425.1 415.3L430.0 416.7M420.8 422.8L436.1 423.9M420.8 422.8L426.1 432.6M426.1 432.6L422.6 443.4M422.6 443.4L434.6 446.7M422.6 443.4L420.2 451.1M422.3 463.7L431.0 460.6M422.3 463.7L422.9 469.6M422.9 469.6L433.2 468.3M422.9 469.6L427.7 480.0M427.7 480.0L426.8 489.9M426.8 489.9L436.8 490.8M420.2 497.3L423.5 509.2M422.8 517.6L436.9 518.4M424.3 522.7L426.9 530.7M426.9 530.7L430.6 535.1M426.9 530.7L426.6 540.4M426.1 564.8L432.2 563.3M426.1 564.8L420.0 569.9M421.5 588.0L430.1 588.8M422.8 599.7L432.2 598.9M422.8 599.7L422.1 609.6M422.1 609.6L436.3 605.4M422.1 609.6L422.3 612.7M425.6 624.0L432.4 621.8M425.6 624.0L420.9 634.1M429.6 266.3L444.2 265.6M429.6 266.3L434.6 275.3M434.6 275.3L444.8 274.4M434.0 280.8L443.1 281.6M434.0 280.8L432.2 290.2M436.1 296.7L438.8 299.4M436.1 296.7L436.1 305.2M436.1 305.2L444.3 310.7M430.6 316.1L436.2 327.0M436.2 327.0L441.4 326.6M436.2 327.0L432.0 339.1M432.0 339.1L443.0 335.3M430.9 344.7L443.4 348.4M430.9 344.7L433.3 356.0M433.3 356.0L439.5 355.2M435.0 364.2L444.2 362.1M431.8 370.6L441.9 375.8M431.8 370.6L430.2 383.7M430.2 383.7L438.3 381.3M434.3 391.9L439.3 392.3M434.3 391.9L430.4 398.5M430.4 398.5L445.5 399.2M430.4 398.5L435.2 408.6M430.5 433.4L444.6 435.2M434.6 446.7L441.3 447.6M434.6 446.7L430.2 450.2M431.0 460.6L441.1 464.1M431.0 460.6L433.2 468.3M436.8 490.8L440.2 488.2M436.8 490.8L429.8 501.7M429.8 501.7L438.1 497.3M429.8 501.7L429.8 506.1M436.9 518.4L440.8 514.1M436.9 518.4L434.9 524.5M434.9 524.5L439.8 526.9M429.9 540.7L439.8 545.4M432.1 548.3L441.1 549.7M432.1 548.3L432.2 563.3M432.2 563.3L439.0 563.2M432.2 563.3L434.5 570.0M434.1 578.7L430.1 588.8M430.1 588.8L439.8 591.7M430.1 588.8L432.2 598.9M432.2 598.9L440.8 598.1M436.3 605.4L444.5 608.5M436.3 605.4L433.6 617.0M433.6 617.0L432.4 621.8M432.4 621.8L442.4 621.0M444.2 265.6L444.8 274.4M443.1 281.6L450.4 279.5M443.1 281.6L440.5 292.0M444.3 310.7L449.4 308.8M444.3 310.7L443.0 316.0M443.0 316.0L450.4 319.1M441.4 326.6L452.3 325.9M443.0 335.3L443.4 348.4M443.4 348.4L447.5 347.6M439.5 355.2L454.2 356.3M441.9 375.8L452.1 368.1M439.3 392.3L445.5 399.2M445.5 399.2L447.8 396.1M445.5 399.2L438.8 408.6M444.6 435.2L448.3 438.1M441.3 447.6L451.9 446.3M439.7 454.5L452.3 456.2M441.1 464.1L453.3 464.7M441.1 464.1L439.0 474.9M439.0 474.9L440.8 476.5M440.2 488.2L450.5 492.1M441.4 508.6L440.8 514.1M440.8 514.1L439.8 526.9M439.8 526.9L445.5 534.2M445.5 534.2L450.9 534.0M445.5 534.2L439.8 545.4M439.8 545.4L441.1 549.7M441.1 549.7L439.0 563.2M444.5 571.1L452.3 572.7M444.5 571.1L441.8 579.5M441.8 579.5L439.8 591.7M439.8 591.7L440.8 598.1M440.8 598.1L452.1 598.1M441.7 613.4L452.5 618.5M453.8 262.1L463.2 260.3M450.0 271.0L461.7 274.0M450.4 279.5L458.7 284.9M450.4 279.5L447.0 292.8M447.0 292.8L449.2 298.0M449.2 298.0L449.4 308.8M449.4 308.8L450.4 319.1M450.4 319.1L452.3 325.9M452.3 325.9L454.4 338.8M454.4 338.8L462.6 335.2M447.5 347.6L460.0 343.2M447.5 347.6L454.2 356.3M454.2 356.3L460.1 357.8M448.1 365.7L452.1 368.1M452.1 368.1L458.6 370.5M452.1 368.1L447.1 384.6M452.2 388.0L461.1 392.3M447.8 396.1L456.3 400.8M447.8 396.1L448.9 410.2M448.9 410.2L449.8 414.2M449.8 414.2L456.4 415.4M449.8 414.2L454.2 428.3M454.2 428.3L456.0 423.5M454.2 428.3L448.3 438.1M448.3 438.1L451.9 446.3M451.9 446.3L452.3 456.2M452.3 456.2L453.3 464.7M451.2 481.9L450.5 492.1M450.5 492.1L451.4 496.1M451.4 496.1L462.1 494.8M450.9 512.5L450.7 522.2M450.7 522.2L461.2 524.0M451.3 545.9L460.5 541.1M447.1 554.7L450.7 561.5M450.7 561.5L458.5 560.4M450.7 561.5L452.3 572.7M452.3 572.7L461.1 573.5M452.3 572.7L450.0 578.4M450.0 578.4L456.4 579.5M450.0 578.4L454.7 584.6M452.1 598.1L447.2 606.9M447.2 606.9L452.5 618.5M449.6 627.9L460.7 627.5M463.2 260.3L461.7 274.0M461.7 274.0L470.2 270.7M461.7 274.0L458.7 284.9M458.7 284.9L466.2 278.1M458.7 284.9L458.9 290.8M458.9 290.8L465.0 292.5M458.9 290.8L460.2 302.2M459.4 318.4L466.0 314.1M462.6 325.3L462.6 335.2M460.0 343.2L465.4 347.2M460.1 357.8L470.7 356.8M461.2 365.3L470.8 359.7M458.6 370.5L470.0 373.7M458.6 370.5L458.4 381.7M458.4 381.7L461.1 392.3M461.1 392.3L467.0 393.7M461.1 392.3L456.3 400.8M456.0 423.5L463.4 435.9M463.4 435.9L466.3 437.9M463.4 435.9L461.3 446.3M461.3 446.3L463.3 453.9M463.3 453.9L460.9 463.0M460.9 463.0L468.5 463.4M461.4 477.7L467.9 481.2M461.4 477.7L461.3 488.7M461.3 488.7L470.0 488.3M462.1 494.8L468.1 500.3M457.5 503.3L472.6 509.3M462.2 519.3L469.5 514.3M462.2 519.3L461.2 524.0M461.2 524.0L462.6 536.3M462.6 536.3L460.5 541.1M458.4 551.4L472.8 554.7M458.5 560.4L469.8 559.5M458.5 560.4L461.1 573.5M461.1 573.5L468.4 573.1M462.5 597.6L463.3 605.6M456.1 614.1L468.4 615.7M460.7 627.5L471.5 627.1M460.7 627.5L463.8 632.8M468.3 260.8L480.5 266.9M468.3 260.8L470.2 270.7M466.2 278.1L480.8 284.5M466.2 278.1L465.0 292.5M466.0 303.7L476.8 296.7M466.0 303.7L465.7 312.0M465.7 312.0L478.4 311.4M465.7 312.0L466.0 314.1M466.0 314.1L475.6 320.0M466.0 314.1L470.8 324.9M470.8 324.9L470.9 333.5M470.9 333.5L465.4 347.2M465.4 347.2L477.7 342.7M465.4 347.2L470.7 356.8M470.7 356.8L476.0 356.0M470.7 356.8L470.8 359.7M470.8 359.7L470.0 373.7M468.7 384.5L480.2 378.9M468.7 384.5L467.0 393.7M470.7 395.1L481.1 399.2M470.7 395.1L465.1 409.2M465.1 409.2L477.8 408.7M465.1 409.2L471.5 413.6M471.5 413.6L475.5 414.5M467.5 427.8L475.4 427.6M467.5 427.8L466.3 437.9M466.3 437.9L476.9 435.5M468.9 440.5L477.2 444.1M468.9 440.5L467.9 453.6M467.9 453.6L475.2 449.4M467.9 453.6L468.5 463.4M466.2 473.4L474.8 472.1M466.2 473.4L467.9 481.2M467.9 481.2L480.3 477.2M467.9 481.2L470.0 488.3M468.1 500.3L478.2 494.2M472.6 509.3L474.3 510.9M472.6 509.3L469.5 514.3M469.5 514.3L480.9 515.9M469.5 514.3L465.5 528.8M470.6 536.6L480.2 533.4M470.6 536.6L467.7 543.8M467.7 543.8L472.8 554.7M472.8 554.7L469.8 559.5M469.8 559.5L468.4 573.1M468.4 573.1L475.6 567.4M468.4 573.1L468.0 580.5M468.0 580.5L474.7 575.4M468.0 580.5L469.8 591.2M471.5 595.3L477.7 600.6M471.5 595.3L465.0 604.1M465.0 604.1L468.4 615.7M468.4 615.7L478.8 614.2M471.5 627.1L475.0 627.7M471.5 627.1L465.3 635.7M480.5 266.9L488.1 267.7M480.5 266.9L478.6 271.2M480.8 284.5L486.6 279.3M480.8 284.5L479.5 294.3M479.5 294.3L490.7 294.9M479.5 294.3L476.8 296.7M476.8 296.7L478.4 311.4M478.4 311.4L475.6 320.0M481.5 324.9L489.7 323.4M481.5 324.9L478.9 337.4M478.9 337.4L489.3 337.7M478.9 337.4L477.7 342.7M480.3 362.7L489.0 366.5M474.7 374.5L480.2 378.9M480.2 378.9L487.7 383.1M480.2 378.9L478.6 393.2M481.1 399.2L485.1 396.0M477.8 408.7L486.9 405.3M475.5 414.5L484.9 414.1M475.4 427.6L488.4 422.1M475.4 427.6L476.9 435.5M476.9 435.5L488.7 432.6M475.2 449.4L484.8 456.5M482.0 461.0L474.8 472.1M474.8 472.1L484.1 470.6M480.3 477.2L483.8 483.4M480.3 477.2L478.8 487.8M478.8 487.8L489.7 490.0M478.2 494.2L474.3 510.9M481.6 545.1L484.2 546.0M481.6 545.1L480.6 555.7M480.6 555.7L485.1 551.3M480.6 555.7L476.0 557.3M476.0 557.3L484.2 559.2M476.0 557.3L475.6 567.4M475.6 567.4L474.7 575.4M474.7 575.4L484.3 578.9M474.7 575.4L478.5 591.0M478.5 591.0L485.5 591.2M478.5 591.0L477.7 600.6M477.7 600.6L481.3 602.5M481.3 602.5L483.5 609.2M481.3 602.5L478.8 614.2M475.0 627.7L476.1 633.5M488.1 267.7L494.9 267.9M488.4 272.1L500.0 276.4M488.4 272.1L486.6 279.3M486.6 279.3L492.8 280.3M486.6 279.3L490.7 294.9M484.8 296.3L497.8 298.3M485.0 307.8L499.8 305.1M485.0 307.8L490.2 321.2M490.2 321.2L498.5 316.7M490.2 321.2L489.7 323.4M489.7 323.4L493.1 323.0M489.3 337.7L488.2 348.9M488.2 348.9L493.5 344.5M488.4 370.4L493.4 374.2M488.4 370.4L487.7 383.1M487.7 383.1L497.7 378.6M487.7 383.1L483.8 388.6M483.8 388.6L485.1 396.0M486.9 405.3L484.9 414.1M484.9 414.1L496.9 418.7M484.9 414.1L488.4 422.1M488.7 432.6L493.6 431.5M488.7 432.6L483.3 447.4M483.3 447.4L497.9 443.3M483.3 447.4L484.8 456.5M484.1 470.6L498.7 473.9M484.1 470.6L483.8 483.4M483.8 483.4L495.9 476.1M489.7 490.0L499.3 488.8M489.7 490.0L486.6 496.7M486.6 496.7L499.0 496.1M489.6 506.8L488.0 513.1M484.8 521.5L495.0 525.8M484.8 521.5L488.7 534.4M488.7 534.4L484.2 546.0M484.2 546.0L495.6 543.1M485.1 551.3L493.0 553.7M485.1 551.3L484.2 559.2M484.2 559.2L489.7 568.7M489.7 568.7L494.6 571.7M489.7 568.7L484.3 578.9M484.3 578.9L495.1 581.0M484.3 578.9L485.5 591.2M485.5 591.2L492.5 591.0M483.9 600.8L499.6 597.0M483.5 609.2L488.3 612.7M488.3 612.7L496.3 611.2M486.8 622.3L485.1 630.6M494.9 267.9L503.0 266.5M500.0 276.4L492.8 280.3M499.2 287.5L501.1 291.8M499.2 287.5L497.8 298.3M497.8 298.3L505.6 300.2M499.8 305.1L498.5 316.7M498.5 316.7L508.0 319.7M498.5 316.7L493.1 323.0M493.1 323.0L501.4 324.0M493.1 323.0L498.7 336.2M498.7 336.2L504.9 336.0M493.5 344.5L503.2 342.0M499.3 351.7L504.2 351.1M496.6 360.1L505.7 365.9M493.4 374.2L502.2 372.6M493.4 374.2L497.7 378.6M492.6 386.7L507.6 393.5M496.9 399.0L504.1 398.4M494.2 405.6L507.7 408.2M494.2 405.6L496.9 418.7M496.9 418.7L504.2 420.5M493.6 431.5L502.9 433.7M493.6 431.5L497.9 443.3M497.9 443.3L497.8 449.4M497.8 449.4L507.4 456.3M498.5 460.7L507.5 464.8M498.7 473.9L501.4 471.1M498.7 473.9L495.9 476.1M495.9 476.1L508.7 483.5M495.9 476.1L499.3 488.8M499.3 488.8L503.0 488.4M499.3 488.8L499.0 496.1M499.0 496.1L506.1 496.9M499.0 496.1L493.5 509.7M493.5 509.7L505.2 503.6M493.5 509.7L494.9 513.3M494.9 513.3L495.0 525.8M495.0 525.8L492.0 534.2M492.0 534.2L508.8 536.2M492.0 534.2L495.6 543.1M495.6 543.1L508.5 544.1M493.0 553.7L507.5 555.1M498.5 563.9L508.1 557.3M498.5 563.9L494.6 571.7M495.1 581.0L506.4 577.2M495.1 581.0L492.5 591.0M492.5 591.0L499.6 597.0M499.6 597.0L506.0 595.0M496.1 606.2L505.2 605.5M496.1 606.2L496.3 611.2M496.3 611.2L508.6 613.3M499.7 621.8L503.4 625.2M499.7 621.8L493.5 629.8M503.0 266.5L501.2 269.8M501.2 269.8L512.1 272.7M501.2 269.8L506.6 279.6M501.1 291.8L511.0 288.1M501.1 291.8L505.6 300.2M505.6 300.2L512.3 299.3M506.6 305.8L512.3 306.9M508.0 319.7L510.7 318.4M501.4 324.0L516.7 327.9M501.4 324.0L504.9 336.0M503.2 342.0L504.2 351.1M504.2 351.1L513.7 354.4M504.2 351.1L505.7 365.9M505.7 365.9L514.9 362.8M502.2 372.6L507.0 378.3M507.0 378.3L507.6 393.5M507.6 393.5L504.1 398.4M504.1 398.4L510.1 397.8M504.1 398.4L507.7 408.2M507.7 408.2L504.2 420.5M504.2 420.5L514.5 416.9M507.2 424.7L512.3 429.9M507.2 424.7L502.9 433.7M502.9 433.7L504.5 447.8M507.4 456.3L507.5 464.8M507.5 464.8L510.5 461.1M508.7 483.5L510.9 477.8M508.7 483.5L503.0 488.4M506.1 496.9L505.2 503.6M505.2 503.6L504.5 516.0M501.2 522.1L508.8 536.2M508.8 536.2L508.5 544.1M508.5 544.1L507.5 555.1M507.5 555.1L516.3 553.7M508.1 557.3L517.3 558.0M506.1 568.1L506.4 577.2M506.4 577.2L505.3 591.4M505.3 591.4L506.0 595.0M506.0 595.0L514.6 596.3M506.0 595.0L505.2 605.5M505.2 605.5L516.3 609.0M505.2 605.5L508.6 613.3M508.6 613.3L503.4 625.2M503.4 625.2L513.6 623.7M503.4 625.2L502.0 633.8M517.6 264.1L522.1 264.4M514.3 279.2L511.0 288.1M511.0 288.1L512.3 299.3M512.3 306.9L510.7 318.4M510.7 318.4L523.7 314.7M514.6 337.2L511.6 346.7M511.6 346.7L513.7 354.4M513.7 354.4L514.9 362.8M514.9 362.8L519.1 359.4M512.5 369.9L523.5 372.0M511.8 381.1L513.1 390.7M513.1 390.7L510.1 397.8M510.1 397.8L523.1 399.1M510.1 397.8L516.9 405.9M516.9 405.9L514.5 416.9M514.5 416.9L521.9 417.8M514.5 416.9L512.3 429.9M512.3 429.9L521.8 429.6M511.3 440.5L519.8 443.0M511.3 440.5L517.0 452.5M517.0 452.5L522.2 453.5M510.5 461.1L513.5 472.9M513.5 472.9L526.7 470.9M513.5 472.9L510.9 477.8M510.9 477.8L517.7 490.9M517.7 490.9L527.0 487.7M511.2 496.7L523.2 500.5M512.8 508.4L520.4 505.5M514.9 518.8L526.8 518.6M514.9 518.8L516.6 525.1M516.6 525.1L515.9 535.9M515.9 535.9L526.2 535.5M516.1 542.8L525.6 546.9M516.1 542.8L516.3 553.7M516.3 553.7L526.1 551.4M517.3 558.0L520.3 559.3M516.1 579.7L514.0 591.7M514.0 591.7L514.6 596.3M514.9 614.0L522.3 617.3M513.6 623.7L515.8 631.3M522.1 264.4L534.7 264.7M522.1 264.4L522.1 271.6M522.1 271.6L533.3 270.6M522.1 271.6L525.3 284.8M525.3 284.8L532.0 282.4M523.0 290.6L530.1 292.2M523.0 290.6L520.5 298.4M520.5 298.4L532.3 304.0M520.2 309.6L532.6 308.3M520.2 309.6L523.7 314.7M523.7 314.7L529.0 315.3M523.7 314.7L526.4 325.6M526.4 325.6L534.1 323.9M525.7 338.7L528.8 333.4M526.7 342.6L532.2 347.6M526.7 342.6L522.4 357.3M519.1 359.4L528.5 359.1M519.1 359.4L523.5 372.0M523.5 372.0L526.4 383.2M526.4 383.2L523.3 394.0M523.1 399.1L528.8 402.2M523.1 399.1L524.5 407.1M524.5 407.1L532.7 406.8M521.9 417.8L521.8 429.6M524.4 435.2L532.7 438.7M519.8 443.0L522.2 453.5M522.2 453.5L530.0 449.4M522.2 453.5L523.6 465.0M523.6 465.0L535.4 464.8M523.6 465.0L526.7 470.9M526.7 470.9L530.5 474.2M526.7 470.9L522.5 481.0M522.5 481.0L534.5 478.4M522.5 481.0L527.0 487.7M527.0 487.7L532.8 492.7M523.2 500.5L520.4 505.5M520.4 505.5L529.9 506.1M520.4 505.5L526.8 518.6M526.8 518.6L533.7 513.8M526.8 518.6L523.1 521.9M526.2 535.5L525.6 546.9M525.6 546.9L529.9 540.4M526.1 551.4L530.9 549.5M520.3 559.3L535.8 559.3M520.3 559.3L523.1 570.0M523.1 570.0L532.5 566.9M520.5 576.5L532.3 578.1M520.5 576.5L524.0 588.8M524.0 588.8L531.2 584.5M521.8 600.9L524.1 602.3M524.1 602.3L530.8 604.0M524.1 602.3L522.3 617.3M522.3 617.3L521.5 625.5M534.7 264.7L538.2 265.6M533.3 270.6L537.7 271.2M532.0 282.4L530.1 292.2M530.1 292.2L540.5 293.7M532.3 304.0L532.6 308.3M529.0 315.3L534.1 323.9M534.1 323.9L538.7 330.6M534.1 323.9L528.8 333.4M532.2 347.6L540.6 342.0M528.5 359.1L544.2 363.7M528.5 359.1L534.2 370.6M534.2 370.6L539.9 370.0M533.7 379.8L541.9 378.7M533.7 379.8L529.4 388.1M529.4 388.1L528.8 402.2M528.8 402.2L532.7 406.8M532.7 406.8L539.2 410.2M531.6 416.1L540.1 418.3M528.4 429.1L541.5 424.5M532.7 438.7L540.1 431.7M531.5 445.0L538.4 446.8M531.5 445.0L530.0 449.4M530.0 449.4L539.6 454.3M530.0 449.4L535.4 464.8M535.4 464.8L537.9 462.5M535.4 464.8L530.5 474.2M530.5 474.2L539.9 471.0M530.5 474.2L534.5 478.4M534.5 478.4L532.8 492.7M532.8 492.7L539.5 486.8M532.8 492.7L532.0 501.6M532.0 501.6L529.9 506.1M533.7 513.8L544.3 518.2M530.5 528.0L544.1 527.9M530.5 528.0L531.9 536.3M531.9 536.3L538.1 532.2M531.9 536.3L529.9 540.4M529.9 540.4L530.9 549.5M530.9 549.5L542.3 550.8M535.8 559.3L540.3 562.3M535.8 559.3L532.5 566.9M532.5 566.9L542.6 568.0M532.5 566.9L532.3 578.1M531.2 584.5L542.0 585.5M529.0 599.6L537.9 600.3M529.0 599.6L530.8 604.0M530.8 604.0L542.9 607.7M529.5 613.3L537.3 611.3M529.9 620.3L533.3 631.7M538.2 265.6L537.7 271.2M537.7 271.2L551.1 270.4M543.7 279.0L552.7 282.6M543.7 279.0L540.5 293.7M540.5 293.7L551.7 289.0M540.5 293.7L543.4 297.3M543.4 297.3L549.5 301.5M543.4 297.3L539.8 310.8M539.8 310.8L548.8 305.0M539.8 310.8L540.0 321.7M540.0 321.7L552.7 320.2M540.0 321.7L538.7 330.6M538.7 330.6L548.3 323.3M538.7 330.6L541.0 333.8M541.0 333.8L540.6 342.0M540.6 342.0L546.4 343.0M540.6 342.0L542.7 352.1M542.7 352.1L544.2 363.7M544.2 363.7L539.9 370.0M539.9 370.0L541.9 378.7M544.0 387.0L552.0 392.6M544.0 387.0L541.1 399.3M539.2 410.2L540.1 418.3M540.1 418.3L553.4 418.5M540.1 418.3L541.5 424.5M541.5 424.5L551.9 428.6M541.5 424.5L540.1 431.7M540.1 431.7L538.4 446.8M538.4 446.8L546.4 445.6M539.6 454.3L549.4 453.1M537.9 462.5L553.4 459.0M537.9 462.5L539.9 471.0M539.9 471.0L552.1 467.3M539.9 471.0L539.4 476.5M539.4 476.5L551.6 482.4M539.5 486.8L548.1 489.4M539.5 486.8L538.0 499.7M538.0 499.7L539.3 506.2M544.1 527.9L549.3 522.6M538.1 532.2L537.2 544.4M540.3 562.3L550.1 560.6M542.6 568.0L553.5 568.8M542.6 568.0L543.8 577.8M543.8 577.8L542.0 585.5M542.0 585.5L547.1 588.5M537.9 600.3L548.7 599.5M542.9 607.7L550.4 608.1M542.9 607.7L537.3 611.3M538.3 621.6L550.8 623.7M538.3 621.6L539.4 632.0M546.3 262.5L551.1 270.4M551.1 270.4L557.9 270.7M551.1 270.4L552.7 282.6M551.7 289.0L549.5 301.5M549.5 301.5L548.8 305.0M548.8 305.0L557.6 308.7M548.3 323.3L552.8 336.9M552.8 336.9L546.4 343.0M547.7 366.3L552.0 368.7M552.0 368.7L551.6 380.1M551.6 380.1L559.3 377.1M551.6 380.1L552.0 392.6M553.6 407.4L560.2 406.0M553.6 407.4L553.4 418.5M553.4 418.5L551.9 428.6M551.9 428.6L555.2 428.2M551.9 428.6L551.0 434.6M551.0 434.6L561.7 433.4M546.4 445.6L556.5 445.1M549.4 453.1L561.8 456.4M553.4 459.0L556.3 464.3M553.4 459.0L552.1 467.3M552.1 467.3L561.6 472.9M552.1 467.3L551.6 482.4M551.6 482.4L557.6 477.5M551.6 482.4L548.1 489.4M548.1 489.4L561.6 487.6M553.8 499.1L557.9 498.4M553.8 499.1L550.4 505.0M550.4 505.0L546.5 514.9M546.5 514.9L556.9 512.3M546.5 514.9L549.3 522.6M549.3 522.6L559.5 526.0M548.5 531.1L551.7 544.4M551.7 544.4L562.2 546.6M551.7 544.4L547.9 549.9M547.9 549.9L550.1 560.6M553.5 568.8L559.6 566.6M548.4 582.1L560.5 576.3M548.7 599.5L555.7 593.3M550.4 608.1L558.5 603.5M550.4 608.1L547.4 616.3M547.4 616.3L560.8 611.0M547.4 616.3L550.8 623.7M550.8 623.7L561.7 626.8M556.6 292.6L558.6 296.9M558.6 296.9L557.6 308.7M557.6 308.7L566.4 308.5M557.6 308.7L557.9 315.3M555.7 346.7L571.8 348.3M555.7 346.7L562.8 354.5M562.8 354.5L555.9 362.9M555.9 362.9L571.7 364.0M558.5 369.5L559.3 377.1M562.4 391.2L566.4 390.6M562.4 391.2L560.0 402.5M560.0 402.5L571.6 398.8M560.0 402.5L560.2 406.0M557.0 414.1L566.7 420.1M555.2 428.2L561.7 433.4M561.7 433.4L556.5 445.1M556.5 445.1L564.7 445.3M556.5 445.1L561.8 456.4M561.8 456.4L567.0 453.6M561.8 456.4L556.3 464.3M556.3 464.3L567.3 462.2M561.6 472.9L568.5 470.2M561.6 487.6L571.1 489.4M561.6 487.6L557.9 498.4M557.9 498.4L564.9 500.9M557.9 498.4L558.0 509.7M558.0 509.7L556.9 512.3M556.9 512.3L568.2 514.0M559.5 526.0L561.6 535.6M561.6 535.6L565.8 534.6M561.6 535.6L562.2 546.6M562.2 546.6L564.9 543.1M562.2 546.6L559.0 552.0M559.0 552.0L568.7 548.6M560.5 576.3L558.5 591.8M558.5 591.8L570.1 584.9M558.5 591.8L555.7 593.3M555.7 593.3L558.5 603.5M558.5 603.5L564.8 608.6M558.5 603.5L560.8 611.0M560.8 611.0L567.1 612.4M560.8 611.0L561.7 626.8M561.7 626.8L571.7 624.5M568.1 272.4L574.9 272.0M569.3 293.6L571.2 297.3M566.4 308.5L580.1 310.0M565.6 323.7L580.3 330.0M566.6 335.7L574.3 338.0M566.6 335.7L571.8 348.3M570.9 357.8L578.4 356.6M570.9 357.8L571.7 364.0M569.4 381.9L566.4 390.6M566.4 390.6L577.8 386.8M569.2 406.4L566.7 420.1M566.7 420.1L564.2 423.5M569.4 434.6L579.7 435.7M569.4 434.6L564.7 445.3M564.7 445.3L567.0 453.6M567.0 453.6L567.3 462.2M568.5 470.2L575.3 472.5M568.5 470.2L564.9 477.4M564.9 477.4L576.0 477.2M571.1 489.4L580.0 489.3M564.9 500.9L578.5 500.5M568.2 514.0L567.9 525.4M567.9 525.4L577.0 528.0M567.9 525.4L565.8 534.6M565.8 534.6L579.4 530.3M564.9 543.1L574.5 545.5M567.3 557.6L576.8 558.3M567.3 557.6L567.5 572.9M567.5 572.9L579.8 569.1M568.4 580.7L580.0 579.9M570.1 584.9L573.6 586.6M570.1 584.9L571.9 598.8M571.9 598.8L564.8 608.6M564.8 608.6L577.7 602.3M564.8 608.6L567.1 612.4M567.1 612.4L574.4 613.9M567.1 612.4L571.7 624.5M579.2 260.5L582.0 264.6M574.9 272.0L584.7 269.2M574.9 272.0L573.1 282.8M574.7 289.4L582.4 288.2M578.7 299.4L580.1 310.0M580.1 310.0L584.2 309.0M580.0 318.5L580.3 330.0M575.7 347.1L578.4 356.6M574.0 362.0L587.1 364.1M578.8 377.3L577.8 386.8M577.8 386.8L589.5 391.5M577.8 386.8L577.4 401.4M577.4 401.4L584.4 401.1M573.9 411.4L578.4 415.0M574.5 425.6L586.4 425.2M579.7 435.7L573.9 440.2M573.9 440.2L584.6 447.9M573.9 440.2L573.9 455.4M573.9 455.4L574.5 462.4M574.5 462.4L575.3 472.5M575.3 472.5L584.8 468.1M575.3 472.5L576.0 477.2M576.0 477.2L580.0 489.3M580.0 489.3L585.6 488.6M578.5 500.5L586.5 496.4M580.6 503.1L583.4 503.5M580.6 503.1L575.7 513.2M577.0 528.0L587.8 525.4M577.0 528.0L579.4 530.3M579.4 530.3L589.5 532.7M579.4 530.3L574.5 545.5M574.5 545.5L589.4 543.7M576.8 558.3L586.6 564.9M579.8 569.1L584.9 572.2M579.8 569.1L580.0 579.9M580.0 579.9L585.4 581.9M580.0 579.9L573.6 586.6M573.6 586.6L574.7 600.2M574.7 600.2L589.2 595.2M574.7 600.2L577.7 602.3M574.4 613.9L583.3 613.1M574.4 613.9L576.7 624.6M582.0 264.6L595.8 266.9M584.7 269.2L585.7 285.9M585.7 285.9L596.9 285.7M585.7 285.9L582.4 288.2M582.4 288.2L595.8 287.6M587.4 298.2L597.5 303.0M587.4 298.2L584.2 309.0M584.2 309.0L584.1 318.6M584.1 318.6L592.5 318.3M586.2 330.7L589.9 332.3M589.9 332.3L598.4 333.7M589.0 356.2L587.1 364.1M587.1 364.1L596.4 361.7M587.1 364.1L584.9 370.3M584.9 370.3L591.5 371.3M584.9 370.3L588.4 384.0M589.5 391.5L584.4 401.1M584.4 401.1L587.9 408.1M587.1 415.8L586.4 425.2M586.4 425.2L582.5 433.7M584.6 447.9L593.6 440.7M585.9 451.9L592.2 450.1M583.9 459.9L597.1 458.7M583.9 459.9L584.8 468.1M584.8 468.1L597.5 470.4M582.1 483.0L585.6 488.6M585.6 488.6L586.5 496.4M586.5 496.4L595.8 496.6M586.5 496.4L583.4 503.5M587.8 525.4L597.2 523.5M587.8 525.4L589.5 532.7M589.5 532.7L597.2 537.8M589.5 532.7L589.4 543.7M589.4 543.7L582.6 549.4M582.6 549.4L586.6 564.9M586.6 564.9L592.1 557.1M586.6 564.9L584.9 572.2M584.9 572.2L594.8 571.2M585.4 581.9L582.5 587.9M582.5 587.9L598.9 585.8M582.5 587.9L589.2 595.2M589.2 595.2L597.1 593.7M589.2 595.2L584.1 602.2M584.1 602.2L591.2 603.1M583.3 613.1L587.6 621.7M587.6 621.7L595.4 621.5M587.6 621.7L585.2 630.6M595.8 266.9L601.2 261.4M596.2 270.6L596.9 285.7M596.9 285.7L595.8 287.6M595.8 287.6L606.2 288.9M595.8 287.6L597.5 303.0M597.5 303.0L607.9 300.0M597.5 303.0L593.7 306.1M592.5 318.3L606.4 317.7M598.0 328.1L598.4 333.7M598.4 333.7L600.9 337.9M593.6 347.0L596.2 353.2M596.2 353.2L603.2 356.9M596.2 353.2L596.4 361.7M596.4 361.7L600.5 363.5M591.5 371.3L591.4 382.0M591.4 382.0L607.6 382.0M591.4 382.0L593.7 390.0M593.7 390.0L601.8 388.0M593.7 390.0L595.8 397.1M595.8 397.1L594.7 404.1M594.7 404.1L598.4 417.5M598.9 422.4L595.9 436.8M595.9 436.8L593.6 440.7M592.2 450.1L607.0 451.1M597.1 458.7L606.0 464.6M597.1 458.7L597.5 470.4M597.5 470.4L602.3 469.7M595.3 480.7L603.9 483.1M595.3 480.7L595.4 490.3M595.8 496.6L596.9 505.1M596.9 505.1L604.6 510.1M596.7 518.1L601.7 519.1M597.2 523.5L602.9 527.2M594.6 541.2L595.2 555.5M595.2 555.5L592.1 557.1M592.1 557.1L594.8 571.2M594.8 571.2L600.1 573.3M594.8 571.2L597.2 577.9M597.2 577.9L598.9 585.8M598.9 585.8L600.8 585.3M591.2 603.1L602.7 609.3M591.2 603.1L591.5 615.0M591.5 615.0L595.4 621.5M595.4 621.5L607.8 620.3M595.4 621.5L598.5 631.9M601.2 261.4L614.5 260.3M601.3 278.2L612.4 278.8M606.2 288.9L607.9 300.0M607.9 300.0L611.5 303.0M605.1 307.8L606.4 317.7M606.4 317.7L610.1 317.4M606.4 317.7L602.6 330.2M602.6 330.2L610.4 328.5M602.6 330.2L600.9 337.9M600.5 346.2L613.0 341.9M603.2 356.9L611.8 354.0M600.5 363.5L616.3 361.8M600.5 363.5L603.3 375.4M603.3 375.4L610.7 375.7M603.3 375.4L607.6 382.0M607.6 382.0L616.1 382.9M601.8 388.0L602.1 398.5M601.9 405.6L606.1 418.1M602.4 430.0L611.9 422.1M602.4 430.0L601.7 435.6M601.7 435.6L614.5 436.2M601.7 435.6L601.3 446.9M601.3 446.9L613.4 444.4M607.0 451.1L614.5 456.9M606.0 464.6L616.0 463.7M606.0 464.6L602.3 469.7M602.3 469.7L603.9 483.1M603.9 483.1L612.4 483.8M603.9 483.1L601.3 490.5M601.3 490.5L612.1 488.1M601.3 490.5L604.8 497.6M604.8 497.6L612.3 495.1M604.8 497.6L604.6 510.1M604.6 510.1L601.7 519.1M601.7 519.1L613.9 519.4M601.7 519.1L602.9 527.2M606.9 531.5L612.0 531.9M602.4 548.2L615.7 554.3M602.4 548.2L600.9 564.8M600.9 564.8L616.3 557.4M600.1 573.3L601.2 580.9M600.8 585.3L611.5 591.8M605.5 593.7L609.0 599.0M605.5 593.7L602.7 609.3M602.7 609.3L605.7 618.1M605.7 618.1L613.7 619.0M607.8 620.3L610.9 625.0M614.5 260.3L623.7 263.1M613.0 270.9L622.2 273.9M612.4 278.8L623.4 280.6M612.4 278.8L609.2 294.9M609.2 294.9L623.0 291.3M609.2 294.9L611.5 303.0M611.5 303.0L619.8 300.9M611.5 303.0L610.0 308.9M610.0 308.9L610.1 317.4M610.4 328.5L622.2 326.8M610.4 328.5L610.2 337.9M610.2 337.9L613.0 341.9M613.0 341.9L611.8 354.0M611.8 354.0L622.2 354.2M616.3 361.8L624.5 360.9M610.7 375.7L616.1 382.9M616.1 382.9L621.7 382.1M611.2 387.4L624.6 393.2M609.3 408.1L612.3 417.5M612.3 417.5L611.9 422.1M614.5 436.2L618.8 433.9M613.4 444.4L624.4 444.2M614.5 456.9L621.6 449.7M616.0 463.7L621.2 466.0M612.2 469.5L623.6 470.6M612.4 483.8L621.8 482.4M612.4 483.8L612.1 488.1M612.1 488.1L624.1 486.2M612.1 488.1L612.3 495.1M612.3 495.1L623.4 496.9M617.0 503.0L613.9 519.4M611.0 525.9L612.0 531.9M610.6 539.9L615.7 554.3M615.7 554.3L616.3 557.4M614.6 568.6L624.7 566.7M614.6 568.6L614.2 579.4M614.2 579.4L611.5 591.8M611.5 591.8L619.6 587.4M611.5 591.8L609.0 599.0M615.8 606.1L621.0 602.4M615.8 606.1L613.7 619.0M610.9 625.0L614.9 632.0M623.7 263.1L633.5 262.8M622.2 273.9L630.1 273.6M622.2 273.9L623.4 280.6M623.4 280.6L634.4 279.5M623.0 291.3L634.8 292.7M620.1 312.3L629.6 305.6M621.8 319.8L633.0 317.0M621.8 319.8L622.2 326.8M622.2 326.8L631.2 327.0M622.2 326.8L619.8 333.1M619.8 333.1L625.4 345.2M625.4 345.2L622.2 354.2M622.2 354.2L630.7 353.7M622.2 354.2L624.5 360.9M624.5 360.9L633.7 362.3M621.7 382.1L630.5 380.9M621.7 382.1L624.6 393.2M624.6 393.2L624.9 395.3M624.9 395.3L632.4 400.9M624.9 395.3L621.1 410.7M621.1 410.7L630.2 404.3M621.1 410.7L624.5 414.0M624.5 414.0L632.4 417.4M624.5 414.0L619.2 424.0M619.2 424.0L618.8 433.9M621.6 449.7L627.8 449.7M621.2 466.0L633.0 462.5M621.8 482.4L632.7 479.9M621.8 482.4L624.1 486.2M623.4 496.9L622.2 504.9M622.2 504.9L635.0 509.5M622.2 504.9L621.0 514.7M619.6 534.6L627.0 537.9M620.6 558.9L633.9 561.4M624.7 566.7L623.1 581.9M623.1 581.9L627.4 577.4M623.1 581.9L619.6 587.4M619.6 587.4L633.9 590.4M624.3 597.9L633.9 595.1M624.3 597.9L621.0 602.4M621.0 602.4L628.6 602.4M621.0 602.4L621.5 613.9M621.5 613.9L623.7 622.4M623.7 622.4L630.7 623.9M633.5 262.8L642.4 261.6M633.5 262.8L630.1 273.6M630.1 273.6L634.4 279.5M634.4 279.5L636.4 280.5M634.4 279.5L634.8 292.7M630.0 301.3L640.5 298.6M630.0 301.3L629.6 305.6M629.6 305.6L638.2 311.4M629.6 305.6L633.0 317.0M631.2 327.0L642.4 327.7M631.2 327.0L634.2 338.1M627.2 345.7L639.6 348.0M627.2 345.7L630.7 353.7M630.7 353.7L636.5 353.5M630.8 375.1L642.9 368.6M631.1 392.6L643.4 390.5M631.1 392.6L632.4 400.9M632.4 400.9L642.4 399.0M630.2 404.3L641.4 409.4M632.4 417.4L633.2 428.2M627.9 432.8L627.6 446.5M627.6 446.5L627.8 449.7M627.8 449.7L642.3 456.6M633.0 462.5L627.4 472.4M627.4 472.4L638.1 474.2M627.4 472.4L632.7 479.9M632.7 479.9L627.4 490.5M627.4 490.5L636.5 490.6M630.3 498.7L636.3 500.7M635.0 509.5L638.3 504.9M634.0 513.2L629.7 525.1M629.7 525.1L627.0 537.9M627.0 537.9L643.3 532.6M629.2 541.1L629.5 550.0M629.5 550.0L642.4 555.8M629.5 550.0L633.9 561.4M633.9 561.4L631.1 569.4M631.1 569.4L639.0 571.1M627.4 577.4L633.9 590.4M633.9 590.4L636.7 587.7M633.9 595.1L641.8 596.4M628.6 602.4L641.4 602.9M628.6 602.4L631.3 614.0M631.3 614.0L642.6 612.0M630.7 623.9L643.4 628.0M630.7 623.9L631.7 631.9M642.4 261.6L647.3 262.8M642.4 261.6L643.4 273.4M643.4 273.4L651.0 273.0M643.4 273.4L636.4 280.5M636.4 280.5L640.3 290.3M640.3 290.3L648.9 293.9M640.3 290.3L640.5 298.6M638.2 311.4L645.7 306.1M638.3 319.7L647.2 321.1M642.4 327.7L651.8 324.8M639.6 339.5L652.4 332.3M639.6 339.5L639.6 348.0M639.6 348.0L649.8 348.7M636.5 353.5L647.8 357.6M641.1 359.4L650.3 359.4M641.1 359.4L642.9 368.6M642.9 368.6L647.7 371.6M642.9 368.6L640.8 378.4M640.8 378.4L647.0 382.9M643.4 390.5L646.4 392.3M643.4 390.5L642.4 399.0M642.4 399.0L641.4 409.4M641.4 409.4L649.5 404.8M641.4 409.4L638.4 414.7M638.4 414.7L649.4 419.3M642.7 423.2L643.3 432.7M643.3 432.7L645.3 435.1M643.3 432.7L636.8 440.8M636.8 440.8L645.8 445.2M636.8 440.8L642.3 456.6M638.1 474.2L641.5 477.2M641.5 477.2L646.4 483.5M641.5 477.2L636.5 490.6M636.5 490.6L647.7 491.7M636.5 490.6L636.3 500.7M638.3 504.9L646.2 503.8M638.3 504.9L640.7 514.5M640.5 522.2L649.0 525.3M640.5 522.2L643.3 532.6M643.3 532.6L642.7 540.2M642.7 540.2L642.4 555.8M642.4 555.8L639.1 557.3M639.1 557.3L639.0 571.1M639.0 571.1L646.6 567.0M639.0 571.1L637.8 579.4M641.8 596.4L645.1 600.5M641.8 596.4L641.4 602.9M641.4 602.9L648.9 608.3M642.6 612.0L649.6 616.5M643.4 628.0L646.8 626.0M643.4 628.0L643.5 633.2M647.3 262.8L654.2 263.1M651.0 273.0L658.1 271.3M651.0 273.0L652.4 278.7M648.9 293.9L658.6 288.9M648.9 293.9L649.8 300.3M649.8 300.3L645.7 306.1M645.7 306.1L659.7 305.5M645.7 306.1L647.2 321.1M647.2 321.1L656.0 318.8M647.2 321.1L651.8 324.8M652.4 332.3L649.8 348.7M649.8 348.7L660.5 343.7M647.8 357.6L660.5 353.7M647.8 357.6L650.3 359.4M650.3 359.4L661.4 359.1M647.7 371.6L647.0 382.9M647.0 382.9L657.3 377.7M646.4 392.3L647.4 395.6M649.5 404.8L656.8 405.1M649.5 404.8L649.4 419.3M649.4 419.3L649.8 425.7M649.8 425.7L656.6 429.8M649.8 425.7L645.3 435.1M645.3 435.1L662.0 437.3M645.3 435.1L645.8 445.2M645.8 445.2L657.8 444.0M646.1 453.6L647.8 461.0M647.8 461.0L650.3 468.3M650.3 468.3L655.6 472.0M647.7 491.7L652.0 497.8M646.2 503.8L661.7 508.4M646.2 503.8L652.0 512.9M652.0 512.9L660.0 513.1M649.0 525.3L660.6 528.5M649.0 525.3L645.9 533.7M645.9 533.7L661.2 536.0M645.9 533.7L646.3 543.3M646.6 560.2L660.6 563.3M646.6 560.2L646.6 567.0M646.9 582.0L661.7 579.3M646.9 582.0L649.0 591.1M649.0 591.1L661.6 584.9M645.1 600.5L661.7 599.3M648.9 608.3L656.0 608.7M648.9 608.3L649.6 616.5M649.6 616.5L655.9 612.6M646.8 626.0L646.2 631.1M654.2 263.1L658.1 271.3M661.1 278.7L658.6 288.9M658.6 288.9L670.5 293.6M658.8 302.3L659.7 305.5M659.7 305.5L668.2 311.7M659.7 305.5L656.0 318.8M656.0 318.8L661.9 323.3M661.9 323.3L658.9 337.5M658.9 337.5L660.5 343.7M660.5 343.7L663.1 341.9M660.5 353.7L669.5 353.3M661.4 359.1L667.8 362.7M661.4 359.1L661.5 371.3M656.0 391.9L659.4 396.2M659.4 396.2L663.7 397.2M659.4 396.2L656.8 405.1M656.8 405.1L655.6 414.8M655.6 414.8L668.3 419.5M656.6 429.8L664.0 427.5M656.6 429.8L662.0 437.3M657.8 444.0L664.5 442.2M657.8 444.0L660.2 456.3M660.2 456.3L670.7 451.9M655.6 472.0L667.9 474.2M660.8 482.3L666.2 480.0M654.7 490.7L670.6 489.1M656.8 495.3L661.7 508.4M660.0 513.1L667.2 512.0M660.6 528.5L664.4 528.6M661.2 536.0L660.7 545.4M660.7 545.4L658.7 551.5M658.7 551.5L663.8 552.4M660.6 563.3L661.0 568.4M661.7 579.3L670.2 580.3M661.7 579.3L661.6 584.9M661.6 584.9L663.6 589.0M661.7 599.3L666.6 600.7M661.7 599.3L656.0 608.7M656.0 608.7L665.9 607.3M656.0 608.7L655.9 612.6M657.7 621.9L657.9 636.3" fill="none" stroke="#aebde0" stroke-width="0.55"/>
<path d="M556.0 452L555.2 505M560.2 452L559.6 505M565.2 452L567.0 505M569.6 452L570.9 505M572.8 452L571.3 505M576.5 452L575.0 505M580.3 452L582.2 505M585.0 452L586.8 505M588.4 452L587.3 505M591.5 452L590.6 505M594.6 452L594.7 505M598.2 452L598.9 505M602.3 452L602.7 505M605.9 452L606.8 505M610.3 452L611.1 505M614.2 452L614.1 505M556 452.0L616 450.2M556 455.9L616 456.4M556 459.3L616 460.7M556 464.1L616 465.5M556 468.7L616 468.6M556 472.0L616 471.1M556 476.5L616 478.5M556 479.7L616 477.8M556 483.5L616 482.8M556 487.6L616 486.1M556 492.3L616 491.7M556 497.2L616 496.5M556 500.8L616 499.5M440.0 426L440.4 452M445.7 426L443.9 452M450.7 426L451.7 452M456.7 426L458.5 452M460.9 426L460.4 452M466.9 426L467.0 452M472.8 426L471.8 452M476.9 426L478.7 452M481.4 426L481.6 452M440 426.0L482 426.3M440 431.9L482 433.7M440 437.6L482 436.6M440 443.3L482 441.3M440 448.1L482 449.9M468.0 455L467.5 478M473.2 455L472.1 478M478.6 455L479.2 478M482.8 455L484.5 478M486.9 455L487.7 478M491.6 455L490.2 478M495.8 455L497.8 478M501.4 455L501.2 478M507.0 455L508.8 478M512.8 455L512.9 478M468 455.0L516 455.1M468 461.0L516 461.9M468 466.3L516 467.7M468 471.1L516 471.4M468 476.8L516 475.6M396.0 395L394.1 416M401.1 395L401.4 416M405.4 395L407.1 416M410.2 395L409.0 416M415.1 395L415.4 416M419.9 395L417.9 416M424.1 395L425.0 416M396 395.0L428 394.0M396 400.6L428 402.1M396 406.4L428 405.1M396 410.4L428 411.4M396 415.6L428 415.0M340.0 318L339.7 334M344.5 318L344.8 334M350.4 318L349.3 334M354.6 318L355.4 334M358.8 318L357.7 334M363.7 318L365.6 334M368.3 318L367.6 334M373.3 318L371.9 334M340 318.0L378 318.8M340 322.6L378 323.8M340 327.0L378 325.4M340 332.3L378 332.1M500.0 366L498.4 388M505.5 366L506.2 388M510.2 366L508.7 388M515.5 366L516.5 388M520.4 366L520.3 388M500 366.0L522 366.4M500 370.8L522 369.6M500 375.8L522 376.0M500 381.6L522 383.5M500 386.7L522 386.0M416.0 586L416.5 601M421.5 586L420.5 601M426.9 586L428.9 601M431.6 586L433.4 601M436.5 586L437.1 601M442.2 586L441.1 601M446.9 586L448.9 601M451.1 586L450.3 601M456.0 586L457.0 601M461.3 586L463.0 601M466.6 586L464.6 601M416 586.0L468 584.1M416 590.9L468 589.0M416 595.9L468 596.4M416 600.3L468 601.7" fill="none" stroke="#b3bedc" stroke-width="0.35"/>
<path d="M307,331.6 L340,329.8 L367.4,328 L394.9,326.1 L420,326.1" fill="none" stroke="#9aa8d8" stroke-width="1.3" stroke-linejoin="round" stroke-linecap="round" />
<path d="M352.8,273 L356.5,295 L365.6,313.3 L369.3,318.8" fill="none" stroke="#9aa8d8" stroke-width="1.3" stroke-linejoin="round" stroke-linecap="round" />
<path d="M307,296.8 L325.3,306 L340,317 L349.1,320.6" fill="none" stroke="#9aa8d8" stroke-width="1.3" stroke-linejoin="round" stroke-linecap="round" />
<path d="M343.6,314.2 L380.3,309.6 L420,302.3 L456.6,309.6 L480.4,306.9 L507.9,298.6 L533,309.6" fill="none" stroke="#9aa8d8" stroke-width="1.3" stroke-linejoin="round" stroke-linecap="round" />
<path d="M341.8,317 L341.8,383 L343.6,443.4 L351,493" fill="none" stroke="#9aa8d8" stroke-width="1.3" stroke-linejoin="round" stroke-linecap="round" />
<path d="M307,359 L340,357.2 L362,359 L389.4,360.9 L420,359.1 L456.6,358.2 L480.4,356.3 L496.9,360.9 L518.9,362.7 L545,358 L566,352" fill="none" stroke="#9aa8d8" stroke-width="1.3" stroke-linejoin="round" stroke-linecap="round" />
<path d="M411.4,273 L409.6,309.6 L405.9,346.3 L402.2,383 L396.7,410.5 L387.6,452.6" fill="none" stroke="#9aa8d8" stroke-width="1.3" stroke-linejoin="round" stroke-linecap="round" />
<path d="M376.6,342.6 L393.1,359 L420,371.9" fill="none" stroke="#9aa8d8" stroke-width="1.3" stroke-linejoin="round" stroke-linecap="round" />
<path d="M443.8,273 L453,296.8 L458.5,317 L471.3,342.6 L480.4,359.1 L487.8,383 L489.6,410.5 L496.9,438 L504.2,465.4 L515.2,493 L513.4,534.3 L527.8,555.9" fill="none" stroke="#9aa8d8" stroke-width="1.3" stroke-linejoin="round" stroke-linecap="round" />
<path d="M462.1,273 L471.3,296.8 L478.6,317 L493.3,333.4 L500.6,348.1 L507.9,359.1 L515.2,371.9 L520.7,383 L522.6,419.6 L518.9,456.3 L529.9,493" fill="none" stroke="#9aa8d8" stroke-width="1.3" stroke-linejoin="round" stroke-linecap="round" />
<path d="M420,312.4 L456.6,312.4 L480.4,314.2 L502.4,317 L533,328 L560,336" fill="none" stroke="#9aa8d8" stroke-width="1.3" stroke-linejoin="round" stroke-linecap="round" />
<path d="M434.7,273 L432.8,328 L436.5,383" fill="none" stroke="#9aa8d8" stroke-width="1.3" stroke-linejoin="round" stroke-linecap="round" />
<path d="M307,413.2 L343.6,412.3 L362,413.2 L396.7,410.5 L420,406.8 L447.5,405 L474.9,401.3 L502.4,397.7 L533,394" fill="none" stroke="#9aa8d8" stroke-width="1.3" stroke-linejoin="round" stroke-linecap="round" />
<path d="M307,416 L325.3,425.1 L343.6,438 L352.8,443.4" fill="none" stroke="#9aa8d8" stroke-width="1.3" stroke-linejoin="round" stroke-linecap="round" />
<path d="M343.6,445.3 L380.3,438 L416.9,434.3" fill="none" stroke="#9aa8d8" stroke-width="1.3" stroke-linejoin="round" stroke-linecap="round" />
<path d="M351,452.6 L385.8,459.9 L398.6,470.9 L402.2,481.9" fill="none" stroke="#9aa8d8" stroke-width="1.3" stroke-linejoin="round" stroke-linecap="round" />
<path d="M316.2,383 L325.3,410.5 L330.8,456.3 L334.5,493 L335.7,516.4" fill="none" stroke="#9aa8d8" stroke-width="1.3" stroke-linejoin="round" stroke-linecap="round" />
<path d="M363.8,383 L365.6,405 L360.1,423.3 L356.5,443.4" fill="none" stroke="#9aa8d8" stroke-width="1.3" stroke-linejoin="round" stroke-linecap="round" />
<path d="M307,509.2 L335.7,516.4 L351.9,518.2 L366.3,514.6 L387.8,513.7 L420,511" fill="none" stroke="#9aa8d8" stroke-width="1.3" stroke-linejoin="round" stroke-linecap="round" />
<path d="M307,559.5 L317.8,568.5 L330.4,581 L337.5,601" fill="none" stroke="#9aa8d8" stroke-width="1.3" stroke-linejoin="round" stroke-linecap="round" />
<path d="M366.3,528.9 L360.9,555.9 L366.3,582.8 L369.9,601" fill="none" stroke="#9aa8d8" stroke-width="1.3" stroke-linejoin="round" stroke-linecap="round" />
<path d="M375.3,520 L378.9,543.3 L387.8,573.8 L396.8,601" fill="none" stroke="#9aa8d8" stroke-width="1.3" stroke-linejoin="round" stroke-linecap="round" />
<path d="M366.3,545.1 L393.2,534.3 L420,528.9 L455.9,532.5 L488.3,541.5 L533,539.7 L560,532" fill="none" stroke="#9aa8d8" stroke-width="1.3" stroke-linejoin="round" stroke-linecap="round" />
<path d="M307,536.1 L325,534.3 L334,527.1 L348.3,493" fill="none" stroke="#9aa8d8" stroke-width="1.3" stroke-linejoin="round" stroke-linecap="round" />
<path d="M395,568.5 L420,564.9 L438,564.9 L473.9,552.3 L491.9,545.1 L533,516.4 L570,492" fill="none" stroke="#9aa8d8" stroke-width="1.3" stroke-linejoin="round" stroke-linecap="round" />
<path d="M407.6,493 L411.2,529 L414.8,601" fill="none" stroke="#9aa8d8" stroke-width="1.3" stroke-linejoin="round" stroke-linecap="round" />
<path d="M493.7,493 L493.7,601" fill="none" stroke="#9aa8d8" stroke-width="1.3" stroke-linejoin="round" stroke-linecap="round" />
<path d="M420,568.5 L473.9,568.5 L533,561.3" fill="none" stroke="#9aa8d8" stroke-width="1.3" stroke-linejoin="round" stroke-linecap="round" />
<path d="M484.7,493 L479.3,529 L464.9,546.9 L443.4,582.8 L430.8,601" fill="none" stroke="#9aa8d8" stroke-width="1.3" stroke-linejoin="round" stroke-linecap="round" />
<path d="M443.8,383 L447.5,406.8 L456.6,428.8 L465.8,443.4" fill="none" stroke="#9aa8d8" stroke-width="1.3" stroke-linejoin="round" stroke-linecap="round" />
<path d="M471.3,383 L473.1,412.3 L471.3,438 L474.9,465.4 L471.3,493 L479.3,529" fill="none" stroke="#9aa8d8" stroke-width="1.3" stroke-linejoin="round" stroke-linecap="round" />
<path d="M447.5,428.8 L474.9,430.6 L502.4,438 L533,439.8 L560,445" fill="none" stroke="#9aa8d8" stroke-width="1.3" stroke-linejoin="round" stroke-linecap="round" />
<path d="M438.3,401.3 L474.9,408.6 L502.4,419.6 L533,432.5 L560,446" fill="none" stroke="#9aa8d8" stroke-width="1.3" stroke-linejoin="round" stroke-linecap="round" />
<path d="M474.9,443.4 L502.4,448.9 L533,452.6 L565,462" fill="none" stroke="#9aa8d8" stroke-width="1.3" stroke-linejoin="round" stroke-linecap="round" />
<path d="M465.8,456.3 L484.1,459.9 L533,461.8 L570,470 L600,478" fill="none" stroke="#9aa8d8" stroke-width="1.3" stroke-linejoin="round" stroke-linecap="round" />
<path d="M533,384.8 L569.6,386.7 L600.7,395.8 L622.7,408.6" fill="none" stroke="#9aa8d8" stroke-width="1.3" stroke-linejoin="round" stroke-linecap="round" />
<path d="M511,300 L540,330 L548,360 L560,385" fill="none" stroke="#9aa8d8" stroke-width="1.3" stroke-linejoin="round" stroke-linecap="round" />
<path d="M533,480 L560,490 L590,500 L619.3,520 L630.1,537.9 L633.7,546.9 L644.5,555.9" fill="none" stroke="#9aa8d8" stroke-width="1.3" stroke-linejoin="round" stroke-linecap="round" />
<path d="M540,470 L545,500 L550,530" fill="none" stroke="#9aa8d8" stroke-width="1.3" stroke-linejoin="round" stroke-linecap="round" />
<path d="M565,455 L575,490 L590,515" fill="none" stroke="#9aa8d8" stroke-width="1.3" stroke-linejoin="round" stroke-linecap="round" />
<path d="M520,505 L560,510 L600,505" fill="none" stroke="#9aa8d8" stroke-width="1.3" stroke-linejoin="round" stroke-linecap="round" />
<path d="M611.7,430.6 L597.1,465.4" fill="none" stroke="#9aa8d8" stroke-width="1.3" stroke-linejoin="round" stroke-linecap="round" />
<path d="M523,553 L533,576 L538,601" fill="none" stroke="#9aa8d8" stroke-width="1.3" stroke-linejoin="round" stroke-linecap="round" />
<polygon points="511.6,273 510.6,281.5 511.6,292 514.8,296.3 525.4,300.5 535.9,304.7 548.6,314.2 559.2,318.4 566.6,323.7 567.6,334.3 565.5,340.6 567.6,349.1 574,356.5 584.5,361.8 595.1,366 603.6,372.3 609.9,378.7 615.2,387.1 618.2,396.6 623.2,403.3 628.2,410 626.5,413.3 619.9,415.8 608.2,417.5 596.6,415 586.6,410 574.9,401.6 563.3,393.3 553.3,392.5 541.1,401.2 533.1,403.9 525.1,403.9 518.5,401.2 514.5,393.2 510.5,385.2 505.2,378.6 498.5,371.9 490.6,369.9 479.9,369.3 470.6,366.6 463.9,367.3 456,370.6 448,377.2 440,382.6 440,384.4 448,382.8 456,377.6 465.3,374.2 474.6,374.8 483.9,375.5 490.6,377.4 495.9,384.1 501.2,392.1 505.2,398.7 511.8,405.4 520,410.2 530,413.5 540,420.1 548.3,426.8 556.6,433.5 563.3,438.5 569.9,446.8 576.6,453.4 586.6,458.4 594.9,465.1 601.6,473.4 604.9,480 608,484 612,490 618,497 624,506 628.7,515 626.7,520.1 608.3,523.1 588,526.2 571.7,532.3 557.4,541.5 545.2,549.6 530.9,557.8 520.7,565.9 514.6,574.1 512.6,582.2 502.4,586 490,584 475,583 460,585 455,592 453,601 645,601 645,273" fill="#83d6eb" />
<polygon points="540,403.3 546.6,398.3 556.6,395 566.6,400 578.3,408.3 591.6,416.6 599.9,423.3 609.9,428.3 621.5,429.9 629.9,438.3 628.2,443.2 618.2,448.2 609.9,446.6 598.2,439.9 584.9,431.6 569.9,423.3 556.6,415 545,408.3" fill="#cdf3df" />
<polygon points="578.3,442.4 589.9,446.6 603.2,453.2 608.2,459.9 606.5,463.2 599.9,459.9 589.9,451.6 579.9,444.9" fill="#cdf3df" />
<polygon points="609.9,456.6 618.2,458.2 619.9,463.2 616.5,467.4 611.5,464.9" fill="#cdf3df" />
<polygon points="522.8,601 530.9,592.4 541.1,587.3 557.4,586.3 567.6,592.4 575.7,601" fill="#cdf3df" />
<polygon points="462,601 468,592 480,589 495,591 500,601" fill="#cdf3df" />
<polygon points="315,273 349,273 345,279 341,281 337,277 333,283 327,281 317,279 315,276" fill="#83d6eb" />
<polygon points="343,283 349,290 353,301 354,307 351,306 348,297 344,290" fill="#83d6eb" />
<path d="M305,346.6 L317.6,345.3 L327,346.6 L336.3,347.9 L344.3,344.6 L353.6,342.6 L362.9,344 L370.9,345.3 L377.5,340 L386.8,336 L393.5,337.3 L398.8,342.6 L400.2,350.6 L402.8,359.9 L408.1,370.6 L416.1,378.6 L426.8,383.9 L437.4,383.9 L441,383.4" fill="none" stroke="#83d6eb" stroke-width="3.6" stroke-linejoin="round" stroke-linecap="round" />
<polygon points="376,338 386,333.5 394,334.5 399,340 393,342 385,340 378,342" fill="#83d6eb" />
<polygon points="414.5,445 419,443.5 425,441.2 430.9,438.2 435.4,438.2 437.7,442 435.4,446.5 439.9,452.5 444.4,454.7 447.4,458.5 451.9,463.7 456.4,468.9 460.9,473.4 463.9,476.4 466.9,479.4 475.9,483.9 478.1,486.9 475.9,492.9 472.9,498.9 466.9,504.9 459.4,509.4 450.4,511.6 439.9,512.4 427.9,510.9 417.5,506.4 408.5,498.9 402.5,489.9 401,479.4 402.5,468.9 407,459.9 411.5,451" fill="#83d6eb" />
<polygon points="433.9,489.9 439.9,486.9 445.9,487.7 444.4,492.9 438.4,495.9 435.4,492.9" fill="#cdf3df" />
<polygon points="447.4,495.9 454.9,491.4 460.9,489.9 462.4,497.4 457.9,503.4 451.9,504.9 448.2,501.9" fill="#cdf3df" />
<polygon points="358,420.3 367.3,419.6 366,429.6 359.3,435 356.6,429.6" fill="#83d6eb" />
<polygon points="389.9,417.6 397.9,418.3 396.6,427 388.6,439 383.3,443 383.9,435 387.3,424.3" fill="#83d6eb" />
<polygon points="492.3,444 502.9,442.6 508.3,446.6 505.6,454.6 499,460 491,460 489.6,452" fill="#83d6eb" />
<polygon points="505.6,482.6 517.6,479.9 520.2,486.6 512.3,494.6 505.6,491.9" fill="#83d6eb" />
<polygon points="476,477 484,476 485.6,485 478,487" fill="#83d6eb" />
<rect x="345.9" y="282" width="17.0" height="6.199999999999989" rx="1" fill="#d9585a"/><text x="354.4" y="286.89" font-size="4.96" font-weight="700" fill="#fff" text-anchor="middle" textLength="14.0" lengthAdjust="spacingAndGlyphs" style="font-family:'Liberation Sans',sans-serif">G233</text>
<rect x="420.8" y="335.5" width="19.30000000000001" height="8.699999999999989" rx="1" fill="#6a9a45"/><rect x="420.8" y="335.5" width="19.30000000000001" height="1.2" fill="#e05a55"/><text x="430.45000000000005" y="342.08" font-size="6.20" font-weight="700" fill="#fff" text-anchor="middle" textLength="16.30000000000001" lengthAdjust="spacingAndGlyphs" style="font-family:'Liberation Sans',sans-serif">G1515</text>
<rect x="340.9" y="360.6" width="17.100000000000023" height="6.199999999999989" rx="1" fill="#d9585a"/><text x="349.45" y="365.49" font-size="4.96" font-weight="700" fill="#fff" text-anchor="middle" textLength="14.100000000000023" lengthAdjust="spacingAndGlyphs" style="font-family:'Liberation Sans',sans-serif">G312</text>
<rect x="317.9" y="494.3" width="18.600000000000023" height="8.199999999999989" rx="1" fill="#6a9a45"/><rect x="317.9" y="494.3" width="18.600000000000023" height="1.2" fill="#e05a55"/><text x="327.2" y="500.63" font-size="6.20" font-weight="700" fill="#fff" text-anchor="middle" textLength="15.600000000000023" lengthAdjust="spacingAndGlyphs" style="font-family:'Liberation Sans',sans-serif">G4012</text>
<rect x="335.1" y="515.3" width="12.899999999999977" height="7.7000000000000455" rx="1" fill="#6a9a45"/><rect x="335.1" y="515.3" width="12.899999999999977" height="1.2" fill="#e05a55"/><text x="341.55" y="521.37" font-size="6.16" font-weight="700" fill="#fff" text-anchor="middle" textLength="9.899999999999977" lengthAdjust="spacingAndGlyphs" style="font-family:'Liberation Sans',sans-serif">G50</text>
<rect x="363" y="518.9" width="16.30000000000001" height="6.800000000000068" rx="1" fill="#d9585a"/><text x="371.15" y="524.26" font-size="5.44" font-weight="700" fill="#fff" text-anchor="middle" textLength="13.300000000000011" lengthAdjust="spacingAndGlyphs" style="font-family:'Liberation Sans',sans-serif">G235</text>
<rect x="382" y="572.1" width="16.5" height="6.2999999999999545" rx="1" fill="#d9585a"/><text x="390.25" y="577.06" font-size="5.04" font-weight="700" fill="#fff" text-anchor="middle" textLength="13.5" lengthAdjust="spacingAndGlyphs" style="font-family:'Liberation Sans',sans-serif">G235</text>
<rect x="548.2" y="501.6" width="13.299999999999955" height="8.299999999999955" rx="1" fill="#6a9a45"/><rect x="548.2" y="501.6" width="13.299999999999955" height="1.2" fill="#e05a55"/><text x="554.85" y="507.98" font-size="6.20" font-weight="700" fill="#fff" text-anchor="middle" textLength="10.299999999999955" lengthAdjust="spacingAndGlyphs" style="font-family:'Liberation Sans',sans-serif">G15</text>
<rect x="575.6" y="512.9" width="19.100000000000023" height="8.600000000000023" rx="1" fill="#6a9a45"/><rect x="575.6" y="512.9" width="19.100000000000023" height="1.2" fill="#e05a55"/><text x="585.1500000000001" y="519.43" font-size="6.20" font-weight="700" fill="#fff" text-anchor="middle" textLength="16.100000000000023" lengthAdjust="spacingAndGlyphs" style="font-family:'Liberation Sans',sans-serif">G1501</text>
<rect x="533" y="576.1" width="13.799999999999955" height="9.199999999999932" rx="1" fill="#6a9a45"/><rect x="533" y="576.1" width="13.799999999999955" height="1.2" fill="#e05a55"/><text x="539.9" y="582.93" font-size="6.20" font-weight="700" fill="#fff" text-anchor="middle" textLength="10.799999999999955" lengthAdjust="spacingAndGlyphs" style="font-family:'Liberation Sans',sans-serif">G15</text>
<circle cx="402.5" cy="316.1" r="1.9" fill="#fff" stroke="#333" stroke-width="0.9"/><text x="405.5" y="321.1" font-size="11" fill="#333" stroke="#fff" stroke-width="2" paint-order="stroke" stroke-linejoin="round" style="font-family:'Liberation Sans',sans-serif">泰州市</text>
<circle cx="346" cy="324.9" r="1.9" fill="#fff" stroke="#333" stroke-width="0.9"/><text x="349" y="329.9" font-size="9.2" fill="#333" stroke="#fff" stroke-width="2" paint-order="stroke" stroke-linejoin="round" style="font-family:'Liberation Sans',sans-serif">扬州市</text>
<circle cx="347.2" cy="351.5" r="1.9" fill="#fff" stroke="#333" stroke-width="0.9"/><text x="350.2" y="356.5" font-size="11" fill="#333" stroke="#fff" stroke-width="2" paint-order="stroke" stroke-linejoin="round" style="font-family:'Liberation Sans',sans-serif">镇江市</text>
<text x="302.3" y="372.4" font-size="11" fill="#333" stroke="#fff" stroke-width="2" paint-order="stroke" stroke-linejoin="round" style="font-family:'Liberation Sans',sans-serif">市</text>
<circle cx="408" cy="400.5" r="1.9" fill="#fff" stroke="#333" stroke-width="0.9"/><text x="411" y="405.5" font-size="11" fill="#333" stroke="#fff" stroke-width="2" paint-order="stroke" stroke-linejoin="round" style="font-family:'Liberation Sans',sans-serif">常州市</text>
<circle cx="509.2" cy="378.8" r="1.9" fill="#fff" stroke="#333" stroke-width="0.9"/><text x="512.2" y="383.8" font-size="11" fill="#333" stroke="#fff" stroke-width="2" paint-order="stroke" stroke-linejoin="round" style="font-family:'Liberation Sans',sans-serif">南通市</text>
<circle cx="444.9" cy="441.3" r="1.9" fill="#fff" stroke="#333" stroke-width="0.9"/><text x="447.9" y="446.3" font-size="11" fill="#333" stroke="#fff" stroke-width="2" paint-order="stroke" stroke-linejoin="round" style="font-family:'Liberation Sans',sans-serif">无锡市</text>
<circle cx="475.6" cy="467.3" r="1.9" fill="#fff" stroke="#333" stroke-width="0.9"/><text x="478.6" y="472.3" font-size="11" fill="#333" stroke="#fff" stroke-width="2" paint-order="stroke" stroke-linejoin="round" style="font-family:'Liberation Sans',sans-serif">苏州市</text>
<text x="578.1" y="481.2" font-size="11" fill="#333" stroke="#fff" stroke-width="2" paint-order="stroke" stroke-linejoin="round" style="font-family:'Liberation Sans',sans-serif">上海市</text>
<text x="424.4" y="524.2" font-size="11" fill="#333" stroke="#fff" stroke-width="2" paint-order="stroke" stroke-linejoin="round" style="font-family:'Liberation Sans',sans-serif">湖州市</text>
<circle cx="494.9" cy="537.2" r="1.9" fill="#fff" stroke="#333" stroke-width="0.9"/><text x="497.9" y="542.2" font-size="11" fill="#333" stroke="#fff" stroke-width="2" paint-order="stroke" stroke-linejoin="round" style="font-family:'Liberation Sans',sans-serif">嘉兴市</text>
<circle cx="428" cy="598.1" r="1.9" fill="#fff" stroke="#333" stroke-width="0.9"/><text x="431" y="603.1" font-size="11" fill="#333" stroke="#fff" stroke-width="2" paint-order="stroke" stroke-linejoin="round" style="font-family:'Liberation Sans',sans-serif">杭州市</text>
<text x="477" y="369" font-size="8" fill="#3f9fb0" transform="rotate(25 477 369)" style="font-family:'Liberation Sans',sans-serif">长江</text>
<text x="424" y="482" font-size="8.5" fill="#3a97a8" transform="rotate(-68 424 482)" style="font-family:'Liberation Sans',sans-serif">太湖</text>
<path d="M402.6,523.1 L424.3,439.4" fill="none" stroke="#1020f0" stroke-width="2.5" stroke-linejoin="round" stroke-linecap="round" stroke-linecap="butt"/>
<path d="M424.3,439.4 L462.9,479.2" fill="none" stroke="#22b422" stroke-width="2.5" stroke-linejoin="round" stroke-linecap="round" stroke-linecap="butt"/>
<path d="M462.9,479.8 L573.9,475.8" fill="none" stroke="#ee2a2a" stroke-width="2.5" stroke-linejoin="round" stroke-linecap="round" stroke-linecap="butt"/>
<path d="M402.6,523.1 L492.5,522.9 L573.9,475.8" fill="none" stroke="#f5861e" stroke-width="2.5" stroke-linejoin="round" stroke-linecap="round" stroke-linecap="butt"/>
<circle cx="573.9" cy="475.8" r="1.6" fill="#e06d10" stroke="#7a3a00" stroke-width="0.5"/>
<g transform="translate(417.7,419.5)"><path d="M5.3 0 C2.37 0 0 2.37 0 5.3 C0 8.6 4.2 11.5 5.3 19 C6.4 11.5 10.6 8.6 10.6 5.3 C10.6 2.37 8.23 0 5.3 0Z" fill="#6f95f3" stroke="#1b2147" stroke-width="0.95"/><path d="M3.9 11.5 L5.3 19 L6.7 11.5Z" fill="#1b2147" opacity="0.85"/><circle cx="5.3" cy="5.3" r="1.45" fill="#111"/></g>
<g transform="translate(416.59999999999997,422)"><path d="M5.3 0 C2.37 0 0 2.37 0 5.3 C0 8.6 4.2 11.5 5.3 19 C6.4 11.5 10.6 8.6 10.6 5.3 C10.6 2.37 8.23 0 5.3 0Z" fill="#f4705e" stroke="#3d1712" stroke-width="0.95"/><path d="M3.9 11.5 L5.3 19 L6.7 11.5Z" fill="#3d1712" opacity="0.85"/><circle cx="5.3" cy="5.3" r="1.45" fill="#111"/></g>
<g transform="translate(431.2,418)"><path d="M5.3 0 C2.37 0 0 2.37 0 5.3 C0 8.6 4.2 11.5 5.3 19 C6.4 11.5 10.6 8.6 10.6 5.3 C10.6 2.37 8.23 0 5.3 0Z" fill="#f4705e" stroke="#3d1712" stroke-width="0.95"/><path d="M3.9 11.5 L5.3 19 L6.7 11.5Z" fill="#3d1712" opacity="0.85"/><circle cx="5.3" cy="5.3" r="1.45" fill="#111"/></g>
<g transform="translate(433.59999999999997,419)"><path d="M5.3 0 C2.37 0 0 2.37 0 5.3 C0 8.6 4.2 11.5 5.3 19 C6.4 11.5 10.6 8.6 10.6 5.3 C10.6 2.37 8.23 0 5.3 0Z" fill="#6f95f3" stroke="#1b2147" stroke-width="0.95"/><path d="M3.9 11.5 L5.3 19 L6.7 11.5Z" fill="#1b2147" opacity="0.85"/><circle cx="5.3" cy="5.3" r="1.45" fill="#111"/></g>
<g transform="translate(455.59999999999997,448.3)"><path d="M5.3 0 C2.37 0 0 2.37 0 5.3 C0 8.6 4.2 11.5 5.3 19 C6.4 11.5 10.6 8.6 10.6 5.3 C10.6 2.37 8.23 0 5.3 0Z" fill="#6f95f3" stroke="#1b2147" stroke-width="0.95"/><path d="M3.9 11.5 L5.3 19 L6.7 11.5Z" fill="#1b2147" opacity="0.85"/><circle cx="5.3" cy="5.3" r="1.45" fill="#111"/></g>
<g transform="translate(458.0,458.3)"><path d="M5.3 0 C2.37 0 0 2.37 0 5.3 C0 8.6 4.2 11.5 5.3 19 C6.4 11.5 10.6 8.6 10.6 5.3 C10.6 2.37 8.23 0 5.3 0Z" fill="#6f95f3" stroke="#1b2147" stroke-width="0.95"/><path d="M3.9 11.5 L5.3 19 L6.7 11.5Z" fill="#1b2147" opacity="0.85"/><circle cx="5.3" cy="5.3" r="1.45" fill="#111"/></g>
<g transform="translate(453.59999999999997,477)"><path d="M5.3 0 C2.37 0 0 2.37 0 5.3 C0 8.6 4.2 11.5 5.3 19 C6.4 11.5 10.6 8.6 10.6 5.3 C10.6 2.37 8.23 0 5.3 0Z" fill="#f4705e" stroke="#3d1712" stroke-width="0.95"/><path d="M3.9 11.5 L5.3 19 L6.7 11.5Z" fill="#3d1712" opacity="0.85"/><circle cx="5.3" cy="5.3" r="1.45" fill="#111"/></g>
<g transform="translate(372.7,472.5)"><path d="M5.3 0 C2.37 0 0 2.37 0 5.3 C0 8.6 4.2 11.5 5.3 19 C6.4 11.5 10.6 8.6 10.6 5.3 C10.6 2.37 8.23 0 5.3 0Z" fill="#f4705e" stroke="#3d1712" stroke-width="0.95"/><path d="M3.9 11.5 L5.3 19 L6.7 11.5Z" fill="#3d1712" opacity="0.85"/><circle cx="5.3" cy="5.3" r="1.45" fill="#111"/></g>
<g transform="translate(396.7,484.7)"><path d="M5.3 0 C2.37 0 0 2.37 0 5.3 C0 8.6 4.2 11.5 5.3 19 C6.4 11.5 10.6 8.6 10.6 5.3 C10.6 2.37 8.23 0 5.3 0Z" fill="#f4705e" stroke="#3d1712" stroke-width="0.95"/><path d="M3.9 11.5 L5.3 19 L6.7 11.5Z" fill="#3d1712" opacity="0.85"/><circle cx="5.3" cy="5.3" r="1.45" fill="#111"/></g>
<g transform="translate(393.3,490.8)"><path d="M5.3 0 C2.37 0 0 2.37 0 5.3 C0 8.6 4.2 11.5 5.3 19 C6.4 11.5 10.6 8.6 10.6 5.3 C10.6 2.37 8.23 0 5.3 0Z" fill="#6f95f3" stroke="#1b2147" stroke-width="0.95"/><path d="M3.9 11.5 L5.3 19 L6.7 11.5Z" fill="#1b2147" opacity="0.85"/><circle cx="5.3" cy="5.3" r="1.45" fill="#111"/></g>
<g transform="translate(417.2,502)"><path d="M5.3 0 C2.37 0 0 2.37 0 5.3 C0 8.6 4.2 11.5 5.3 19 C6.4 11.5 10.6 8.6 10.6 5.3 C10.6 2.37 8.23 0 5.3 0Z" fill="#f4705e" stroke="#3d1712" stroke-width="0.95"/><path d="M3.9 11.5 L5.3 19 L6.7 11.5Z" fill="#3d1712" opacity="0.85"/><circle cx="5.3" cy="5.3" r="1.45" fill="#111"/></g>
<g transform="translate(415.59999999999997,505)"><path d="M5.3 0 C2.37 0 0 2.37 0 5.3 C0 8.6 4.2 11.5 5.3 19 C6.4 11.5 10.6 8.6 10.6 5.3 C10.6 2.37 8.23 0 5.3 0Z" fill="#6f95f3" stroke="#1b2147" stroke-width="0.95"/><path d="M3.9 11.5 L5.3 19 L6.7 11.5Z" fill="#1b2147" opacity="0.85"/><circle cx="5.3" cy="5.3" r="1.45" fill="#111"/></g>
<g transform="translate(452.59999999999997,513)"><path d="M5.3 0 C2.37 0 0 2.37 0 5.3 C0 8.6 4.2 11.5 5.3 19 C6.4 11.5 10.6 8.6 10.6 5.3 C10.6 2.37 8.23 0 5.3 0Z" fill="#f4705e" stroke="#3d1712" stroke-width="0.95"/><path d="M3.9 11.5 L5.3 19 L6.7 11.5Z" fill="#3d1712" opacity="0.85"/><circle cx="5.3" cy="5.3" r="1.45" fill="#111"/></g>
</svg>
  <div style="position:absolute;left:225px;top:6px;width:106.6px;height:24px;background:#fff;border-radius:2px;box-shadow:0 1px 2px rgba(0,0,0,0.25)">
    <div class="abs" style="left:10px;top:4.5px;font-size:10.8px;font-weight:700;color:#000">地图</div>
    <div style="position:absolute;left:41.3px;top:0;width:1px;height:24px;background:#ebebeb"></div>
    <div class="abs" style="left:53px;top:4.5px;font-size:10.8px;color:#565656">卫星图像</div>
  </div>
</div>

<!-- right panel -->
<div class="card" style="left:659px;top:273px;width:267px;height:227px">
  <div class="abs" style="left:10px;top:10px;font-size:12px;font-weight:700;color:#111">行程总览</div>
  <div class="abs para" style="left:10px;top:37.5px">这是一个4天3晚的环太湖自驾游行程，从上海出发，途经<br>苏州、无锡和湖州，最后返回上海。 总行程约450公里，<br>预计驾驶时间8小时。</div>
  <div class="abs para" style="left:10px;top:91.5px">从左侧选择具体日期可以查看详细行程安排，包括推荐景<br>点和住宿信息。</div>
  <div class="abs" style="left:10px;top:134.5px;font-size:10px;letter-spacing:-0.3px;font-weight:700;color:#111">行程亮点:</div>
  <div class="abs para li" style="left:10px;top:155.2px"><i></i>探索苏州太湖湿地公园和东山风景区</div>
  <div class="abs para li" style="left:10px;top:172px"><i></i>游览无锡灵山胜境和拈花湾禅意小镇</div>
  <div class="abs para li" style="left:10px;top:188.8px"><i></i>欣赏宜兴竹海和湖州太湖风光</div>
  <div class="abs para li" style="left:10px;top:205.6px"><i></i>参观南浔古镇，体验江南水乡文化</div>
</div>

<div style="position:absolute;left:934px;top:567.6px;width:142.7px;height:25.2px;border-radius:6px;background:#232323;box-shadow:0 1px 3px rgba(0,0,0,0.2)">
  <svg style="position:absolute;left:7.5px;top:6px" width="15" height="13" viewBox="0 0 15 13"><g fill="none" stroke="#d8d8d8" stroke-width="0.9" stroke-linecap="round">
  <path d="M0.8 6.5v1.2M2.6 5v3.5M4.4 3v7M6.2 1v10.5M8 2.5v9.8M9.8 1.5v9M11.6 4v5.5M13.4 5.5v3"/></g></svg>
  <div class="abs" style="left:27.8px;top:8.2px;font-size:7.9px;line-height:10px;color:#e5e5e5">Created by MiniMax Agent</div>
  <svg style="position:absolute;left:128px;top:11.8px" width="4.8" height="4.8" viewBox="0 0 5 5"><path d="M0.5 0.5L4.5 4.5M4.5 0.5L0.5 4.5" stroke="#cfcfcf" stroke-width="0.8"/></svg>
</div>
</body></html>
